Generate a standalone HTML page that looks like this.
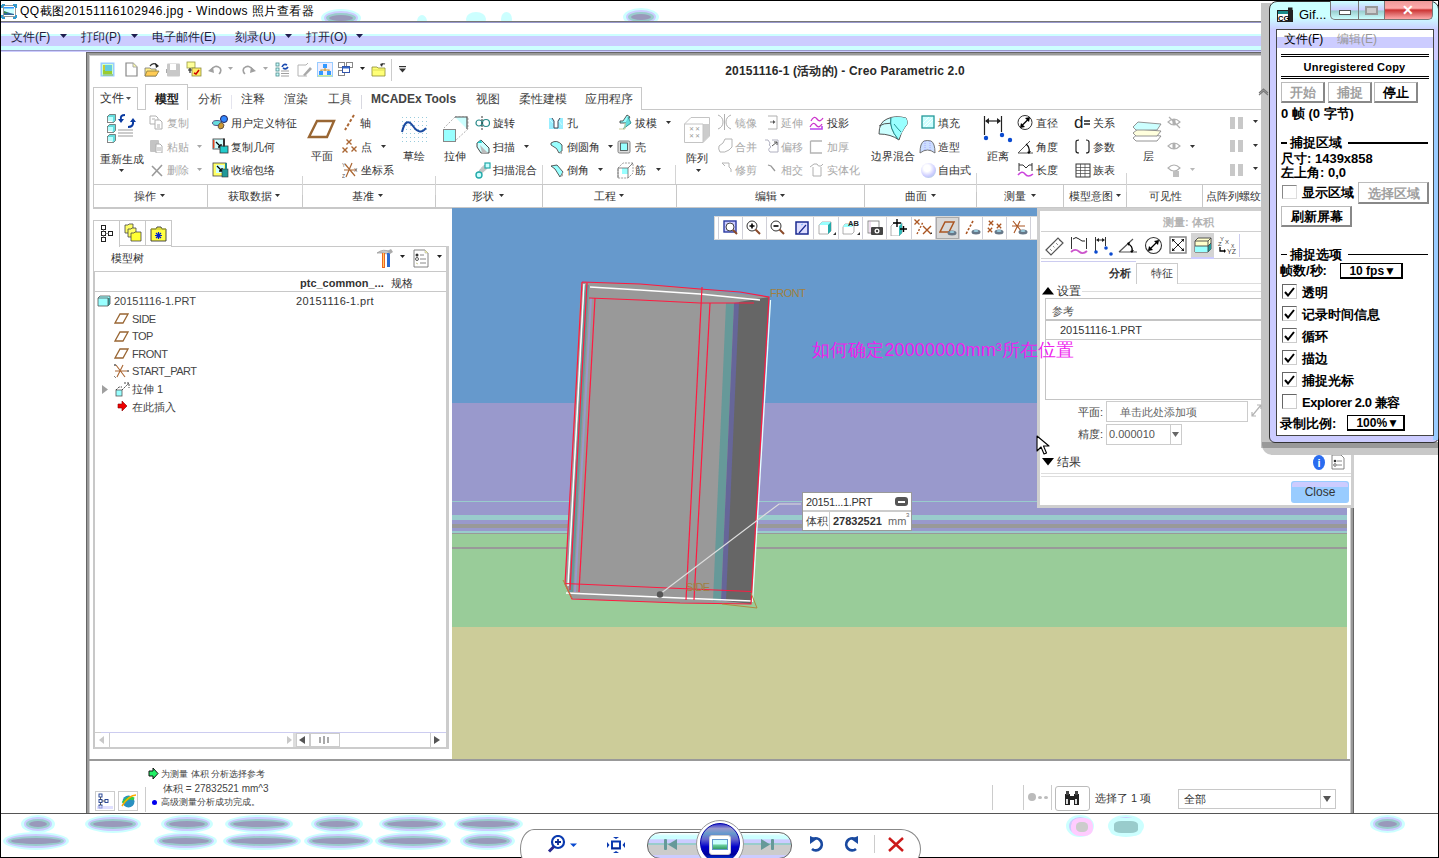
<!DOCTYPE html>
<html><head><meta charset="utf-8"><title>Creo</title>
<style>
html,body{margin:0;padding:0;}
body{width:1439px;height:858px;position:relative;overflow:hidden;background:#fff;font-family:"Liberation Sans",sans-serif;}
body div{position:absolute;box-sizing:border-box;}
.t{white-space:nowrap;}
</style></head><body>
<div style="left:0px;top:0px;width:1439px;height:1px;background:#000"></div><div style="left:0px;top:0px;width:1px;height:858px;background:#000"></div><div style="left:1438px;top:0px;width:1px;height:858px;background:#000"></div><div style="left:0px;top:857px;width:1439px;height:1px;background:#000"></div><svg style="position:absolute;left:1px;top:4px;" width="16" height="15" viewBox="0 0 16 15"><rect x="2.5" y="1.5" width="12" height="11" fill="#fff" stroke="#999" stroke-width="1"/><rect x="3" y="3" width="10" height="8" fill="#ccffff"/><rect x="3" y="3" width="10" height="1.5" fill="#3399ff"/><path d="M3 11V7L6 8L9 9L13 10V11Z" fill="#336699"/><path d="M3 8L6 9" stroke="#339933" stroke-width="1.2"/><path d="M1 1H4M1 1V4M12 1H15V4M1 14V11M1 14H4M15 14H12M15 14V11" stroke="#3399cc" stroke-width="2"/></svg><div class="t" style="left:20px;top:3.0px;font-size:12px;line-height:16px;color:#000;font-weight:400;letter-spacing:0.47px">QQ截图20151116102946.jpg - Windows 照片查看器</div><div style="left:1px;top:21px;width:1437px;height:1px;background:#777"></div><div style="left:1px;top:22px;width:1437px;height:1px;background:#9999cc"></div><div style="left:1px;top:34px;width:1437px;height:2px;background:#ccffff"></div><div style="left:1px;top:36px;width:1437px;height:10px;background:#ccccff"></div><div style="left:1px;top:46px;width:1437px;height:4px;background:#ccffff"></div><div style="left:1px;top:50px;width:1437px;height:1px;background:#9999cc"></div><div style="left:1px;top:51px;width:1437px;height:1px;background:#ccccff"></div><div class="t" style="left:11px;top:29.0px;font-size:12px;line-height:16px;color:#1e1e3c;font-weight:400;">文件(F)</div><div class="t" style="left:81px;top:29.0px;font-size:12px;line-height:16px;color:#1e1e3c;font-weight:400;">打印(P)</div><div class="t" style="left:152px;top:29.0px;font-size:12px;line-height:16px;color:#1e1e3c;font-weight:400;">电子邮件(E)</div><div class="t" style="left:235px;top:29.0px;font-size:12px;line-height:16px;color:#1e1e3c;font-weight:400;">刻录(U)</div><div class="t" style="left:306px;top:29.0px;font-size:12px;line-height:16px;color:#1e1e3c;font-weight:400;">打开(O)</div><svg style="position:absolute;left:60px;top:34px;" width="8" height="5" viewBox="0 0 8 5"><path d="M0 0H7L3.5 4Z" fill="#1e1e50"/></svg><svg style="position:absolute;left:131px;top:34px;" width="8" height="5" viewBox="0 0 8 5"><path d="M0 0H7L3.5 4Z" fill="#1e1e50"/></svg><svg style="position:absolute;left:285px;top:34px;" width="8" height="5" viewBox="0 0 8 5"><path d="M0 0H7L3.5 4Z" fill="#1e1e50"/></svg><svg style="position:absolute;left:356px;top:34px;" width="8" height="5" viewBox="0 0 8 5"><path d="M0 0H7L3.5 4Z" fill="#1e1e50"/></svg><div style="left:1px;top:813px;width:1437px;height:1px;background:#555"></div><div style="left:86px;top:52px;width:1268px;height:761px;background:#fff"></div><div style="left:86px;top:52px;width:4px;height:761px;background:linear-gradient(90deg,#666 0,#666 1px,#999 1px,#999 3px,#ccc 3px)"></div><div style="left:86px;top:52px;width:1268px;height:4px;background:linear-gradient(#666 0,#666 1px,#999 1px,#999 3px,#ccc 3px)"></div><div style="left:89px;top:55px;width:1262px;height:1px;background:#ccc"></div><div style="left:86px;top:52px;width:1px;height:761px;background:#666"></div><div style="left:87px;top:53px;width:2px;height:760px;background:#999"></div><div style="left:89px;top:55px;width:1px;height:758px;background:#ccc"></div><div style="left:1350px;top:52px;width:4px;height:761px;background:linear-gradient(90deg,#ccc 0,#ccc 1px,#999 1px,#999 3px,#666 3px)"></div><div class="t" style="left:645px;width:400px;text-align:center;top:63.0px;font-size:12px;line-height:16px;color:#2a2a2a;font-weight:700;letter-spacing:0.16px">20151116-1 (活动的) - Creo Parametric 2.0</div><div style="left:93px;top:109px;width:1170px;height:1px;background:#c8c8c8"></div><div style="left:93px;top:87px;width:45px;height:23px;border:1px solid #c8c8c8;border-bottom:none;background:#fff"></div><div style="left:188px;top:87px;width:454px;height:23px;border:1px solid #c8c8c8;border-bottom:none;border-left:none;background:#fff"></div><div style="left:145px;top:84px;width:43px;height:26px;border:1px solid #c8c8c8;border-bottom:none;background:#fff"></div><div class="t" style="left:100px;top:90.0px;font-size:12px;line-height:16px;color:#333;font-weight:400;">文件</div><svg style="position:absolute;left:126px;top:97px;" width="6" height="4" viewBox="0 0 6 4"><path d="M0 0H5L2.5 3Z" fill="#555"/></svg><div class="t" style="left:155px;top:90.5px;font-size:12px;line-height:16px;color:#222;font-weight:700;">模型</div><div class="t" style="left:198px;top:90.5px;font-size:12px;line-height:16px;color:#444;font-weight:400;">分析</div><div class="t" style="left:241px;top:90.5px;font-size:12px;line-height:16px;color:#444;font-weight:400;">注释</div><div class="t" style="left:284px;top:90.5px;font-size:12px;line-height:16px;color:#444;font-weight:400;">渲染</div><div class="t" style="left:328px;top:90.5px;font-size:12px;line-height:16px;color:#444;font-weight:400;">工具</div><div class="t" style="left:476px;top:90.5px;font-size:12px;line-height:16px;color:#444;font-weight:400;">视图</div><div class="t" style="left:519px;top:90.5px;font-size:12px;line-height:16px;color:#444;font-weight:400;">柔性建模</div><div class="t" style="left:585px;top:90.5px;font-size:12px;line-height:16px;color:#444;font-weight:400;">应用程序</div><div class="t" style="left:371px;top:90.5px;font-size:12px;line-height:16px;color:#444;font-weight:700;">MCADEx Tools</div><div style="left:231px;top:95px;width:1px;height:14px;background:#e4e4ee"></div><div style="left:361px;top:95px;width:1px;height:14px;background:#d8d8e0"></div><div style="left:93px;top:110px;width:1px;height:98px;background:#c8c8c8"></div><div style="left:93px;top:184px;width:1170px;height:1px;background:#c8c8c8"></div><div style="left:93px;top:207px;width:1170px;height:2px;background:#c8c8c8"></div><div style="left:207px;top:185px;width:1px;height:22px;background:#c8c8c8"></div><div style="left:302px;top:185px;width:1px;height:22px;background:#c8c8c8"></div><div style="left:435px;top:185px;width:1px;height:22px;background:#c8c8c8"></div><div style="left:542px;top:185px;width:1px;height:22px;background:#c8c8c8"></div><div style="left:676px;top:185px;width:1px;height:22px;background:#c8c8c8"></div><div style="left:864px;top:185px;width:1px;height:22px;background:#c8c8c8"></div><div style="left:976px;top:185px;width:1px;height:22px;background:#c8c8c8"></div><div style="left:1126px;top:185px;width:1px;height:22px;background:#c8c8c8"></div><div style="left:1202px;top:185px;width:1px;height:22px;background:#c8c8c8"></div><div style="left:302px;top:176px;width:1px;height:19px;background:#d4d4d4"></div><div style="left:435px;top:176px;width:1px;height:19px;background:#d4d4d4"></div><div style="left:542px;top:165px;width:1px;height:19px;background:#d4d4d4"></div><div style="left:675px;top:165px;width:1px;height:19px;background:#d4d4d4"></div><div style="left:976px;top:173px;width:1px;height:19px;background:#d4d4d4"></div><div style="left:1126px;top:173px;width:1px;height:19px;background:#d4d4d4"></div><div style="left:1063px;top:185px;width:1px;height:22px;background:#c8c8c8"></div><div class="t" style="left:134px;top:189.0px;font-size:11px;line-height:14px;color:#333;font-weight:400;">操作</div><div class="t" style="left:228px;top:189.0px;font-size:11px;line-height:14px;color:#333;font-weight:400;">获取数据</div><div class="t" style="left:352px;top:189.0px;font-size:11px;line-height:14px;color:#333;font-weight:400;">基准</div><div class="t" style="left:472px;top:189.0px;font-size:11px;line-height:14px;color:#333;font-weight:400;">形状</div><div class="t" style="left:594px;top:189.0px;font-size:11px;line-height:14px;color:#333;font-weight:400;">工程</div><div class="t" style="left:755px;top:189.0px;font-size:11px;line-height:14px;color:#333;font-weight:400;">编辑</div><div class="t" style="left:905px;top:189.0px;font-size:11px;line-height:14px;color:#333;font-weight:400;">曲面</div><div class="t" style="left:1004px;top:189.0px;font-size:11px;line-height:14px;color:#333;font-weight:400;">测量</div><div class="t" style="left:1069px;top:189.0px;font-size:11px;line-height:14px;color:#333;font-weight:400;">模型意图</div><svg style="position:absolute;left:160px;top:194px;" width="6" height="4" viewBox="0 0 6 4"><path d="M0 0H5L2.5 3Z" fill="#333"/></svg><svg style="position:absolute;left:275px;top:194px;" width="6" height="4" viewBox="0 0 6 4"><path d="M0 0H5L2.5 3Z" fill="#333"/></svg><svg style="position:absolute;left:378px;top:194px;" width="6" height="4" viewBox="0 0 6 4"><path d="M0 0H5L2.5 3Z" fill="#333"/></svg><svg style="position:absolute;left:499px;top:194px;" width="6" height="4" viewBox="0 0 6 4"><path d="M0 0H5L2.5 3Z" fill="#333"/></svg><svg style="position:absolute;left:619px;top:194px;" width="6" height="4" viewBox="0 0 6 4"><path d="M0 0H5L2.5 3Z" fill="#333"/></svg><svg style="position:absolute;left:780px;top:194px;" width="6" height="4" viewBox="0 0 6 4"><path d="M0 0H5L2.5 3Z" fill="#333"/></svg><svg style="position:absolute;left:931px;top:194px;" width="6" height="4" viewBox="0 0 6 4"><path d="M0 0H5L2.5 3Z" fill="#333"/></svg><svg style="position:absolute;left:1031px;top:194px;" width="6" height="4" viewBox="0 0 6 4"><path d="M0 0H5L2.5 3Z" fill="#333"/></svg><svg style="position:absolute;left:1116px;top:194px;" width="6" height="4" viewBox="0 0 6 4"><path d="M0 0H5L2.5 3Z" fill="#333"/></svg><div class="t" style="left:1149px;top:189.0px;font-size:11px;line-height:14px;color:#333;font-weight:400;">可见性</div><div class="t" style="left:1206px;top:189.0px;font-size:11px;line-height:14px;color:#333;font-weight:400;">点阵列螺纹孔</div><div class="t" style="left:100px;top:151.5px;font-size:11px;line-height:14px;color:#333;font-weight:400;">重新生成</div><svg style="position:absolute;left:119px;top:169px;" width="6" height="4" viewBox="0 0 6 4"><path d="M0 0H5L2.5 3Z" fill="#333"/></svg><div class="t" style="left:167px;top:116.0px;font-size:11px;line-height:14px;color:#a8a8a8;font-weight:400;">复制</div><div class="t" style="left:167px;top:139.5px;font-size:11px;line-height:14px;color:#a8a8a8;font-weight:400;">粘贴</div><svg style="position:absolute;left:197px;top:144.5px;" width="6" height="4" viewBox="0 0 6 4"><path d="M0 0H5L2.5 3Z" fill="#a8a8a8"/></svg><div class="t" style="left:167px;top:163.0px;font-size:11px;line-height:14px;color:#a8a8a8;font-weight:400;">删除</div><svg style="position:absolute;left:197px;top:168px;" width="6" height="4" viewBox="0 0 6 4"><path d="M0 0H5L2.5 3Z" fill="#a8a8a8"/></svg><div class="t" style="left:231px;top:116.0px;font-size:11px;line-height:14px;color:#333;font-weight:400;">用户定义特征</div><div class="t" style="left:231px;top:139.5px;font-size:11px;line-height:14px;color:#333;font-weight:400;">复制几何</div><div class="t" style="left:231px;top:163.0px;font-size:11px;line-height:14px;color:#333;font-weight:400;">收缩包络</div><div class="t" style="left:311px;top:149.0px;font-size:11px;line-height:14px;color:#333;font-weight:400;">平面</div><div class="t" style="left:360px;top:116.0px;font-size:11px;line-height:14px;color:#333;font-weight:400;">轴</div><div class="t" style="left:361px;top:139.5px;font-size:11px;line-height:14px;color:#333;font-weight:400;">点</div><svg style="position:absolute;left:381px;top:144.5px;" width="6" height="4" viewBox="0 0 6 4"><path d="M0 0H5L2.5 3Z" fill="#333"/></svg><div class="t" style="left:361px;top:163.0px;font-size:11px;line-height:14px;color:#333;font-weight:400;">坐标系</div><div class="t" style="left:403px;top:149.0px;font-size:11px;line-height:14px;color:#333;font-weight:400;">草绘</div><div class="t" style="left:444px;top:149.0px;font-size:11px;line-height:14px;color:#333;font-weight:400;">拉伸</div><div class="t" style="left:493px;top:116.0px;font-size:11px;line-height:14px;color:#333;font-weight:400;">旋转</div><div class="t" style="left:493px;top:139.5px;font-size:11px;line-height:14px;color:#333;font-weight:400;">扫描</div><svg style="position:absolute;left:524px;top:144.5px;" width="6" height="4" viewBox="0 0 6 4"><path d="M0 0H5L2.5 3Z" fill="#333"/></svg><div class="t" style="left:493px;top:163.0px;font-size:11px;line-height:14px;color:#333;font-weight:400;">扫描混合</div><div class="t" style="left:567px;top:116.0px;font-size:11px;line-height:14px;color:#333;font-weight:400;">孔</div><div class="t" style="left:567px;top:139.5px;font-size:11px;line-height:14px;color:#333;font-weight:400;">倒圆角</div><svg style="position:absolute;left:608px;top:144.5px;" width="6" height="4" viewBox="0 0 6 4"><path d="M0 0H5L2.5 3Z" fill="#333"/></svg><div class="t" style="left:567px;top:163.0px;font-size:11px;line-height:14px;color:#333;font-weight:400;">倒角</div><svg style="position:absolute;left:598px;top:168px;" width="6" height="4" viewBox="0 0 6 4"><path d="M0 0H5L2.5 3Z" fill="#333"/></svg><div class="t" style="left:635px;top:116.0px;font-size:11px;line-height:14px;color:#333;font-weight:400;">拔模</div><svg style="position:absolute;left:666px;top:121px;" width="6" height="4" viewBox="0 0 6 4"><path d="M0 0H5L2.5 3Z" fill="#333"/></svg><div class="t" style="left:635px;top:139.5px;font-size:11px;line-height:14px;color:#333;font-weight:400;">壳</div><div class="t" style="left:635px;top:163.0px;font-size:11px;line-height:14px;color:#333;font-weight:400;">筋</div><svg style="position:absolute;left:656px;top:168px;" width="6" height="4" viewBox="0 0 6 4"><path d="M0 0H5L2.5 3Z" fill="#333"/></svg><div class="t" style="left:686px;top:151.0px;font-size:11px;line-height:14px;color:#333;font-weight:400;">阵列</div><svg style="position:absolute;left:696px;top:169px;" width="6" height="4" viewBox="0 0 6 4"><path d="M0 0H5L2.5 3Z" fill="#333"/></svg><div class="t" style="left:735px;top:116.0px;font-size:11px;line-height:14px;color:#a8a8a8;font-weight:400;">镜像</div><div class="t" style="left:735px;top:139.5px;font-size:11px;line-height:14px;color:#a8a8a8;font-weight:400;">合并</div><div class="t" style="left:735px;top:163.0px;font-size:11px;line-height:14px;color:#a8a8a8;font-weight:400;">修剪</div><div class="t" style="left:781px;top:116.0px;font-size:11px;line-height:14px;color:#a8a8a8;font-weight:400;">延伸</div><div class="t" style="left:781px;top:139.5px;font-size:11px;line-height:14px;color:#a8a8a8;font-weight:400;">偏移</div><div class="t" style="left:781px;top:163.0px;font-size:11px;line-height:14px;color:#a8a8a8;font-weight:400;">相交</div><div class="t" style="left:827px;top:116.0px;font-size:11px;line-height:14px;color:#333;font-weight:400;">投影</div><div class="t" style="left:827px;top:139.5px;font-size:11px;line-height:14px;color:#a8a8a8;font-weight:400;">加厚</div><div class="t" style="left:827px;top:163.0px;font-size:11px;line-height:14px;color:#a8a8a8;font-weight:400;">实体化</div><div class="t" style="left:871px;top:149.0px;font-size:11px;line-height:14px;color:#333;font-weight:400;">边界混合</div><div class="t" style="left:938px;top:116.0px;font-size:11px;line-height:14px;color:#333;font-weight:400;">填充</div><div class="t" style="left:938px;top:139.5px;font-size:11px;line-height:14px;color:#333;font-weight:400;">造型</div><div class="t" style="left:938px;top:163.0px;font-size:11px;line-height:14px;color:#333;font-weight:400;">自由式</div><div class="t" style="left:987px;top:149.0px;font-size:11px;line-height:14px;color:#333;font-weight:400;">距离</div><div class="t" style="left:1036px;top:116.0px;font-size:11px;line-height:14px;color:#333;font-weight:400;">直径</div><div class="t" style="left:1036px;top:139.5px;font-size:11px;line-height:14px;color:#333;font-weight:400;">角度</div><div class="t" style="left:1036px;top:163.0px;font-size:11px;line-height:14px;color:#333;font-weight:400;">长度</div><div class="t" style="left:1093px;top:116.0px;font-size:11px;line-height:14px;color:#333;font-weight:400;">关系</div><div class="t" style="left:1093px;top:139.5px;font-size:11px;line-height:14px;color:#333;font-weight:400;">参数</div><div class="t" style="left:1093px;top:163.0px;font-size:11px;line-height:14px;color:#333;font-weight:400;">族表</div><div class="t" style="left:1143px;top:149.0px;font-size:11px;line-height:14px;color:#333;font-weight:400;">层</div><div style="left:93px;top:220px;width:27px;height:27px;border:1px solid #c8c8c8;border-bottom:none;background:#fff"></div><div style="left:119px;top:220px;width:27px;height:26px;border:1px solid #c8c8c8;background:#fff"></div><div style="left:145px;top:220px;width:27px;height:26px;border:1px solid #c8c8c8;background:#fff"></div><div style="left:171px;top:246px;width:275px;height:1px;background:#c8c8c8"></div><div style="left:93px;top:246px;width:1px;height:503px;background:#c8c8c8"></div><div class="t" style="left:111px;top:251.0px;font-size:11px;line-height:14px;color:#333;font-weight:400;">模型树</div><div style="left:94px;top:271px;width:352px;height:1px;background:#c8c8c8"></div><div style="left:94px;top:291px;width:352px;height:1px;background:#c8c8c8"></div><div style="left:94px;top:271px;width:1px;height:478px;background:#c8c8c8"></div><div style="left:446px;top:246px;width:3px;height:503px;background:#cccccc"></div><div class="t" style="left:300px;top:276.0px;font-size:11px;line-height:14px;color:#333;font-weight:700;">ptc_common_...</div><div class="t" style="left:391px;top:276.0px;font-size:11px;line-height:14px;color:#333;font-weight:400;">规格</div><div class="t" style="left:114px;top:294.3px;font-size:11px;line-height:14px;color:#444;font-weight:400;">20151116-1.PRT</div><div class="t" style="left:132px;top:311.6px;font-size:11px;line-height:14px;color:#444;font-weight:400;letter-spacing:-0.5px">SIDE</div><div class="t" style="left:132px;top:329.0px;font-size:11px;line-height:14px;color:#444;font-weight:400;letter-spacing:-0.5px">TOP</div><div class="t" style="left:132px;top:346.5px;font-size:11px;line-height:14px;color:#444;font-weight:400;letter-spacing:-0.5px">FRONT</div><div class="t" style="left:132px;top:364.0px;font-size:11px;line-height:14px;color:#444;font-weight:400;letter-spacing:-0.5px">START_PART</div><div class="t" style="left:132px;top:382.0px;font-size:11px;line-height:14px;color:#444;font-weight:400;">拉伸 1</div><div class="t" style="left:132px;top:399.6px;font-size:11px;line-height:14px;color:#444;font-weight:400;">在此插入</div><div class="t" style="left:296px;top:294.3px;font-size:11px;line-height:14px;color:#333;font-weight:400;letter-spacing:0.35px">20151116-1.prt</div><div style="left:95px;top:732px;width:6px;height:1px;background:#ccc"></div><div style="left:101px;top:732px;width:345px;height:1px;background:#ccccf0"></div><div style="left:94px;top:747px;width:355px;height:2px;background:#cccccc"></div><div style="left:109px;top:733px;width:1px;height:14px;background:#ccc"></div><div style="left:293px;top:733px;width:3px;height:14px;background:#ddd"></div><div style="left:296px;top:733px;width:14px;height:14px;border:1px solid #ccc"></div><div style="left:310px;top:733px;width:30px;height:14px;border:1px solid #ccc"></div><div style="left:430px;top:733px;width:15px;height:14px;border-left:1px solid #ccc"></div><div style="left:89px;top:759px;width:1261px;height:2px;background:#999"></div><div class="t" style="left:161px;top:768.0px;font-size:9.1px;line-height:12px;color:#444;font-weight:400;">为测量 体积 分析选择参考</div><div class="t" style="left:163px;top:781.5px;font-size:10px;line-height:13px;color:#444;font-weight:400;">体积 = 27832521 mm^3</div><div class="t" style="left:161px;top:796.0px;font-size:9.1px;line-height:12px;color:#444;font-weight:400;">高级测量分析成功完成。</div><div style="left:152px;top:800px;width:5px;height:5px;background:#0000ee;border-radius:50%"></div><div style="left:145px;top:787px;width:1px;height:25px;background:#ccc"></div><div style="left:95px;top:791px;width:20px;height:20px;border:1px solid #ccc;background:#fff"></div><div style="left:118px;top:791px;width:20px;height:20px;border:1px solid #ccc;background:#fff"></div><div style="left:452px;top:208px;width:895px;height:195px;background:#6699cc"></div><div style="left:452px;top:403px;width:895px;height:98px;background:#9999cc"></div><div style="left:452px;top:501px;width:895px;height:1px;background:#99cccc"></div><div style="left:452px;top:502px;width:895px;height:13px;background:#9999cc"></div><div style="left:452px;top:515px;width:895px;height:5px;background:#99cccc"></div><div style="left:452px;top:520px;width:895px;height:4px;background:#9999cc"></div><div style="left:452px;top:524px;width:895px;height:4px;background:#999999"></div><div style="left:452px;top:528px;width:895px;height:3px;background:#9999cc"></div><div style="left:452px;top:531px;width:895px;height:2px;background:#99cccc"></div><div style="left:452px;top:533px;width:895px;height:1px;background:#999999"></div><div style="left:452px;top:534px;width:895px;height:13px;background:#99cc99"></div><div style="left:452px;top:547px;width:895px;height:2px;background:#999999"></div><div style="left:452px;top:549px;width:895px;height:78px;background:#99cc99"></div><div style="left:452px;top:627px;width:895px;height:132px;background:#cccc99"></div><svg style="position:absolute;left:0;top:0" width="1439" height="858" viewBox="0 0 1439 858">
<polygon points="582,282 640,284 700,289 769,297 751,604 680,603 572,599 565,584" fill="#999999"/>
<polygon points="726,303 734,303 721,601 713,601" fill="#669999"/>
<polygon points="734,303 740,302 727,601 721,601" fill="#666699"/>
<polygon points="739,302 769,297 751,604 726,601" fill="#666666"/>
<polygon points="581,282 595,298 579,592 565,584" fill="#999999"/>
<polyline points="584,284 568,586" stroke="#ffffff" stroke-width="1.5" fill="none"/>
<polygon points="585,285 589,285 573,592 569,592" fill="#669999"/>
<polyline points="591,298 575,592" stroke="#9999cc" stroke-width="2" fill="none"/>
<polyline points="590,287 640,290 700,294 760,300" stroke="#ffffff" stroke-width="1.5" fill="none"/>
<polyline points="566,593 680,598 751,601" stroke="#ffffff" stroke-width="1.5" fill="none"/>
<polyline points="770.5,300 752.5,602" stroke="#e8ffff" stroke-width="1.3" fill="none"/>
<g stroke="#ff1a40" stroke-width="1.2" fill="none">
<polyline points="582,282 640,284 700,289 740,292 769,297 751,604 680,603 572,599 565,584 582,282"/>
<polyline points="589,298 640,300 700,303 754,303"/>
<polyline points="587,283 570,590"/>
<polyline points="595,298 579,592"/>
<polyline points="565,583.5 680,588.5 751,591.5"/>
<polyline points="702,287 686,600"/>
<polyline points="710,303 694,600"/>
</g>
<polyline points="660,594 779,504 801,504" stroke="#dddddd" stroke-width="1.2" fill="none"/>
<circle cx="660" cy="594.5" r="3.2" fill="#555"/>
<g stroke="#b08a40" stroke-width="1" fill="none">
<polyline points="722,604 757,608 751,593"/>
<polyline points="563,580 572,598"/>
</g>
</svg><div class="t" style="left:770px;top:285.5px;font-size:11px;line-height:14px;color:#a08040;font-weight:400;letter-spacing:-0.5px">FRONT</div><div class="t" style="left:686px;top:580.0px;font-size:11px;line-height:14px;color:#a08040;font-weight:400;letter-spacing:-0.5px">SIDE</div><div style="left:802px;top:492px;width:110px;height:39px;background:#fff;border:1px solid #999"></div><div style="left:803px;top:510px;width:108px;height:2px;background:#cccccc"></div><div style="left:829px;top:512px;width:1px;height:18px;background:#ccc"></div><div class="t" style="left:806px;top:495.0px;font-size:11px;line-height:14px;color:#333;font-weight:400;letter-spacing:-0.35px">20151...1.PRT</div><div style="left:895px;top:497px;width:13px;height:9px;background:#555;border-radius:3px"></div><div style="left:898px;top:501px;width:7px;height:1.5px;background:#fff"></div><div class="t" style="left:806px;top:514.0px;font-size:11px;line-height:14px;color:#444;font-weight:400;">体积</div><div class="t" style="left:833px;top:514.0px;font-size:11px;line-height:14px;color:#333;font-weight:700;">27832521</div><div class="t" style="left:888px;top:514.0px;font-size:11px;line-height:14px;color:#666;font-weight:400;">mm</div><div class="t" style="left:906px;top:511.0px;font-size:6px;line-height:8px;color:#666;font-weight:400;">3</div><div style="left:714px;top:216px;width:324px;height:24px;background:#fff;border:1px solid #d8d8d8"></div><div style="left:718px;top:217px;width:1px;height:22px;background:#d0d0d8"></div><div style="left:742px;top:217px;width:1px;height:22px;background:#d0d0d8"></div><div style="left:766px;top:217px;width:1px;height:22px;background:#d0d0d8"></div><div style="left:813px;top:217px;width:1px;height:22px;background:#d0d0d8"></div><div style="left:838px;top:217px;width:1px;height:22px;background:#d0d0d8"></div><div style="left:862px;top:217px;width:1px;height:22px;background:#d0d0d8"></div><div style="left:886px;top:217px;width:1px;height:22px;background:#d0d0d8"></div><div style="left:911px;top:217px;width:1px;height:22px;background:#d0d0d8"></div><div style="left:935px;top:217px;width:1px;height:22px;background:#d0d0d8"></div><div style="left:959px;top:217px;width:1px;height:22px;background:#d0d0d8"></div><div style="left:982px;top:217px;width:1px;height:22px;background:#d0d0d8"></div><div style="left:1006px;top:217px;width:1px;height:22px;background:#d0d0d8"></div><div style="left:1030px;top:217px;width:1px;height:22px;background:#d0d0d8"></div><div style="left:936px;top:217px;width:23px;height:22px;background:#d8d8d8;border:1px solid #aaa"></div><div style="left:1037px;top:208px;width:317px;height:300px;background:#fff;border:3px solid #cfcfcf"></div><div class="t" style="left:1163px;top:215.0px;font-size:11px;line-height:14px;color:#b4b4b4;font-weight:700;">测量: 体积</div><div style="left:1041px;top:231px;width:310px;height:1px;background:#d0d0d0"></div><div style="left:1041px;top:258px;width:310px;height:1px;background:#d0d0d0"></div><div style="left:1191px;top:233px;width:23px;height:25px;background:#d4d4d4"></div><div style="left:1041px;top:261px;width:95px;height:1px;background:#ccccf0"></div><div style="left:1136px;top:263px;width:42px;height:21px;border:1px solid #ccc;border-bottom:none"></div><div style="left:1178px;top:283px;width:172px;height:1px;background:#ddd"></div><div class="t" style="left:1109px;top:266.0px;font-size:11px;line-height:14px;color:#333;font-weight:700;">分析</div><div class="t" style="left:1151px;top:266.0px;font-size:11px;line-height:14px;color:#444;font-weight:400;">特征</div><svg style="position:absolute;left:1042px;top:287px;" width="13" height="8" viewBox="0 0 13 8"><path d="M0 7.5H12L6 0Z" fill="#000"/></svg><div class="t" style="left:1057px;top:283.0px;font-size:12px;line-height:16px;color:#333;font-weight:400;">设置</div><div style="left:1082px;top:291px;width:268px;height:1px;background:#ddd"></div><div style="left:1045px;top:298px;width:305px;height:102px;border:1px solid #c4c4c4;background:#fff"></div><div class="t" style="left:1052px;top:304.0px;font-size:11px;line-height:14px;color:#555;font-weight:400;">参考</div><div style="left:1046px;top:319px;width:304px;height:2px;background:#c4c4c4"></div><div class="t" style="left:1060px;top:323.0px;font-size:11px;line-height:14px;color:#333;font-weight:400;">20151116-1.PRT</div><div style="left:1046px;top:339px;width:304px;height:1px;background:#c8c8c8"></div><div class="t" style="left:1078px;top:405.0px;font-size:11px;line-height:14px;color:#444;font-weight:400;">平面:</div><div style="left:1106px;top:401px;width:142px;height:21px;border:1px solid #ccc"></div><div class="t" style="left:1120px;top:405.0px;font-size:11px;line-height:14px;color:#666;font-weight:400;">单击此处添加项</div><div class="t" style="left:1078px;top:427.0px;font-size:11px;line-height:14px;color:#444;font-weight:400;">精度:</div><div style="left:1106px;top:424px;width:65px;height:21px;border:1px solid #ccc"></div><div style="left:1170px;top:424px;width:12px;height:21px;border:1px solid #ccc;border-left:none"></div><div class="t" style="left:1109px;top:427.0px;font-size:11px;line-height:14px;color:#555;font-weight:400;">0.000010</div><svg style="position:absolute;left:1172px;top:432px;" width="8" height="5" viewBox="0 0 8 5"><path d="M0 0H7L3.5 5Z" fill="#666"/></svg><svg style="position:absolute;left:1042px;top:458px;" width="13" height="8" viewBox="0 0 13 8"><path d="M0 0H12L6 7.5Z" fill="#000"/></svg><div class="t" style="left:1057px;top:454.0px;font-size:12px;line-height:16px;color:#333;font-weight:400;">结果</div><div style="left:1041px;top:473px;width:310px;height:1px;background:#ddd"></div><div style="left:1041px;top:476px;width:310px;height:1px;background:#ddd"></div><div style="left:1291px;top:481px;width:58px;height:22px;background:#99ccff;border-radius:3px"></div><div style="left:1292px;top:482px;width:56px;height:5px;background:#ccccff;border-radius:3px 3px 0 0"></div><div class="t" style="left:1120px;width:400px;text-align:center;top:483.5px;font-size:12px;line-height:16px;color:#333;font-weight:400;">Close</div><div style="left:1313px;top:455px;width:12px;height:15px;background:#2a6cf0;border-radius:50%"></div><div class="t" style="left:1119px;width:400px;text-align:center;top:455.5px;font-size:11px;line-height:14px;color:#fff;font-weight:700;">i</div><svg style="position:absolute;left:1331px;top:454px;" width="14" height="16" viewBox="0 0 14 16"><path d="M1 1H10L13 4V15H1Z" fill="#fff" stroke="#777" stroke-width="0.9"/><circle cx="4" cy="7" r="1.3" fill="#333"/><circle cx="4" cy="11" r="1.3" fill="none" stroke="#333" stroke-width="0.7"/><path d="M6 7H11M6 11H11" stroke="#888"/></svg><div class="t" style="left:812px;top:338.5px;font-size:18px;line-height:23px;color:#ee22ee;font-weight:400;letter-spacing:0.12px">如何确定20000000mm³所在位置</div><div style="left:1261px;top:3px;width:10px;height:445px;background:#c4c4c4"></div><div style="left:1262px;top:442px;width:176px;height:13px;background:linear-gradient(#999 0,#999 6px,#c8c8c8 6px);border-radius:0 0 0 10px"></div><div style="left:1269px;top:1px;width:170px;height:442px;background:linear-gradient(#ccffff 0,#ccffff 15px,#ccccff 28px,#ccccff 100%);border:1px solid #333;border-radius:8px 8px 6px 6px"></div><div style="left:1433px;top:60px;width:5px;height:380px;background:#99ccff"></div><div style="left:1276px;top:29px;width:158px;height:407px;background:#fff;border:1px solid #444"></div><div style="left:1277px;top:37px;width:156px;height:11px;background:#ccccff"></div><div class="t" style="left:1284px;top:31.0px;font-size:12px;line-height:16px;color:#000;font-weight:400;">文件(F)</div><div class="t" style="left:1337px;top:31.0px;font-size:12px;line-height:16px;color:#999;font-weight:400;">编辑(E)</div><svg style="position:absolute;left:1277px;top:7px;" width="16" height="15" viewBox="0 0 16 15"><rect x="0.5" y="3.5" width="15" height="11" fill="#fff" stroke="#222"/><rect x="1" y="4" width="10" height="3" fill="#1a8a8a"/><rect x="11" y="0.5" width="4.5" height="14" fill="#222"/><text x="1" y="13.5" font-size="7.5" font-weight="700" fill="#000" font-family="Liberation Sans">CG</text></svg><div class="t" style="left:1299px;top:5.5px;font-size:13px;line-height:17px;color:#000;font-weight:400;">Gif...</div><div style="left:1330px;top:1px;width:29px;height:19px;background:linear-gradient(#ccffff,#ccccff 50%,#99cccc 55%,#ccffff);border:1px solid #777;border-top:none;border-radius:0 0 0 5px"></div><div style="left:1358px;top:1px;width:27px;height:19px;background:linear-gradient(#ccffff,#ccccff 50%,#99cccc 55%,#ccffff);border:1px solid #777;border-top:none"></div><div style="left:1384px;top:1px;width:49px;height:19px;background:linear-gradient(#ee9999,#ffaaaa 40%,#cc3333 50%,#dd6666 70%,#ffaaaa);border:1px solid #777;border-top:none;border-radius:0 0 5px 0"></div><div style="left:1339px;top:10px;width:12px;height:5px;background:#fff;border:1px solid #555"></div><div style="left:1365px;top:6px;width:13px;height:9px;border:2px solid #999;background:#ccc"></div><div class="t" style="left:1208px;width:400px;text-align:center;top:0.5px;font-size:14px;line-height:18px;color:#fff;font-weight:700;">✕</div><div style="left:1281px;top:54px;width:148px;height:1px;background:#000"></div><div style="left:1281px;top:56px;width:148px;height:1px;background:#000"></div><div style="left:1281px;top:76px;width:148px;height:1px;background:#000"></div><div style="left:1281px;top:78px;width:148px;height:1px;background:#000"></div><div class="t" style="left:1154.5px;width:400px;text-align:center;top:60.0px;font-size:11px;line-height:14px;color:#000;font-weight:700;letter-spacing:0.2px">Unregistered Copy</div><div style="left:1281px;top:82px;width:44px;height:21px;background:#fff;border:1px solid #bbb;border-right:2px solid #888;border-bottom:2px solid #888"></div><div class="t" style="left:1103.0px;width:400px;text-align:center;top:84.0px;font-size:13px;line-height:17px;color:#a0a0a0;font-weight:700;">开始</div><div style="left:1328px;top:82px;width:44px;height:21px;background:#fff;border:1px solid #bbb;border-right:2px solid #888;border-bottom:2px solid #888"></div><div class="t" style="left:1150.0px;width:400px;text-align:center;top:84.0px;font-size:13px;line-height:17px;color:#a0a0a0;font-weight:700;">捕捉</div><div style="left:1374px;top:82px;width:44px;height:21px;background:#fff;border:1px solid #bbb;border-right:2px solid #888;border-bottom:2px solid #888"></div><div class="t" style="left:1196.0px;width:400px;text-align:center;top:84.0px;font-size:13px;line-height:17px;color:#000;font-weight:700;">停止</div><div class="t" style="left:1281px;top:104.5px;font-size:13px;line-height:17px;color:#000;font-weight:700;">0 帧 (0 字节)</div><div style="left:1281px;top:142px;width:6px;height:1.5px;background:#000"></div><div class="t" style="left:1290px;top:134.0px;font-size:13px;line-height:17px;color:#000;font-weight:700;">捕捉区域</div><div style="left:1348px;top:142px;width:80px;height:1.5px;background:#000"></div><div class="t" style="left:1281px;top:149.5px;font-size:13px;line-height:17px;color:#000;font-weight:700;">尺寸: 1439x858</div><div class="t" style="left:1281px;top:163.5px;font-size:13px;line-height:17px;color:#000;font-weight:700;">左上角: 0,0</div><div style="left:1282px;top:185px;width:15px;height:14px;border:1px solid #888;border-right-color:#ddd;border-bottom-color:#ddd;background:#fff"></div><div class="t" style="left:1302px;top:183.5px;font-size:13px;line-height:17px;color:#000;font-weight:700;">显示区域</div><div style="left:1358px;top:182px;width:71px;height:22px;background:#fff;border:1px solid #bbb;border-right:2px solid #888;border-bottom:2px solid #888"></div><div class="t" style="left:1193.5px;width:400px;text-align:center;top:184.5px;font-size:13px;line-height:17px;color:#a0a0a0;font-weight:700;">选择区域</div><div style="left:1281px;top:206px;width:71px;height:21px;background:#fff;border:1px solid #bbb;border-right:2px solid #888;border-bottom:2px solid #888"></div><div class="t" style="left:1116.5px;width:400px;text-align:center;top:208.0px;font-size:13px;line-height:17px;color:#000;font-weight:700;">刷新屏幕</div><div style="left:1281px;top:253.5px;width:6px;height:1.5px;background:#000"></div><div class="t" style="left:1290px;top:245.5px;font-size:13px;line-height:17px;color:#000;font-weight:700;">捕捉选项</div><div style="left:1348px;top:253.5px;width:80px;height:1.5px;background:#000"></div><div class="t" style="left:1280px;top:262.0px;font-size:13px;line-height:17px;color:#000;font-weight:700;">帧数/秒:</div><div style="left:1340px;top:263px;width:63px;height:16px;border:1px solid #000;border-right-width:2px;border-bottom-width:2px;background:#fff"></div><div class="t" style="left:996px;width:400px;text-align:right;top:263.0px;font-size:12px;line-height:16px;color:#000;font-weight:700;">10 fps▼</div><div style="left:1282px;top:284px;width:15px;height:15px;border:1px solid #666;border-right-color:#ccc;border-bottom-color:#ccc;background:#fff"></div><svg style="position:absolute;left:1284px;top:287px;" width="11" height="10" viewBox="0 0 11 10"><path d="M1 5 L4 8.5 L10 1" stroke="#000" stroke-width="2" fill="none"/></svg><div class="t" style="left:1302px;top:283.5px;font-size:13px;line-height:17px;color:#000;font-weight:700;">透明</div><div style="left:1282px;top:306px;width:15px;height:15px;border:1px solid #666;border-right-color:#ccc;border-bottom-color:#ccc;background:#fff"></div><svg style="position:absolute;left:1284px;top:309px;" width="11" height="10" viewBox="0 0 11 10"><path d="M1 5 L4 8.5 L10 1" stroke="#000" stroke-width="2" fill="none"/></svg><div class="t" style="left:1302px;top:305.5px;font-size:13px;line-height:17px;color:#000;font-weight:700;">记录时间信息</div><div style="left:1282px;top:328px;width:15px;height:15px;border:1px solid #666;border-right-color:#ccc;border-bottom-color:#ccc;background:#fff"></div><svg style="position:absolute;left:1284px;top:331px;" width="11" height="10" viewBox="0 0 11 10"><path d="M1 5 L4 8.5 L10 1" stroke="#000" stroke-width="2" fill="none"/></svg><div class="t" style="left:1302px;top:327.5px;font-size:13px;line-height:17px;color:#000;font-weight:700;">循环</div><div style="left:1282px;top:350px;width:15px;height:15px;border:1px solid #666;border-right-color:#ccc;border-bottom-color:#ccc;background:#fff"></div><svg style="position:absolute;left:1284px;top:353px;" width="11" height="10" viewBox="0 0 11 10"><path d="M1 5 L4 8.5 L10 1" stroke="#000" stroke-width="2" fill="none"/></svg><div class="t" style="left:1302px;top:349.5px;font-size:13px;line-height:17px;color:#000;font-weight:700;">描边</div><div style="left:1282px;top:372px;width:15px;height:15px;border:1px solid #666;border-right-color:#ccc;border-bottom-color:#ccc;background:#fff"></div><svg style="position:absolute;left:1284px;top:375px;" width="11" height="10" viewBox="0 0 11 10"><path d="M1 5 L4 8.5 L10 1" stroke="#000" stroke-width="2" fill="none"/></svg><div class="t" style="left:1302px;top:371.5px;font-size:13px;line-height:17px;color:#000;font-weight:700;">捕捉光标</div><div style="left:1282px;top:394px;width:15px;height:15px;border:1px solid #666;border-right-color:#ccc;border-bottom-color:#ccc;background:#fff"></div><div class="t" style="left:1302px;top:393.5px;font-size:13px;line-height:17px;color:#000;font-weight:700;letter-spacing:-0.4px">Explorer 2.0 兼容</div><div class="t" style="left:1280px;top:414.5px;font-size:13px;line-height:17px;color:#000;font-weight:700;">录制比例:</div><div style="left:1347px;top:415px;width:58px;height:16px;border:1px solid #000;border-right-width:2px;border-bottom-width:2px;background:#fff"></div><div class="t" style="left:999px;width:400px;text-align:right;top:415.0px;font-size:12px;line-height:16px;color:#000;font-weight:700;">100%▼</div><div style="left:992px;top:785px;width:1px;height:25px;background:#ccc"></div><div style="left:1023px;top:785px;width:1px;height:25px;background:#ccc"></div><div style="left:1051px;top:785px;width:1px;height:25px;background:#ccc"></div><div style="left:1028px;top:793px;width:8px;height:8px;background:#bbb;border-radius:50%"></div><div style="left:1038px;top:796px;width:4px;height:3px;background:#bbb;border-radius:50%"></div><div style="left:1044px;top:796px;width:4px;height:3px;background:#bbb;border-radius:50%"></div><div style="left:1055px;top:786px;width:35px;height:25px;border:1px solid #bbb;border-radius:3px;background:#fff"></div><svg style="position:absolute;left:1064px;top:790px;" width="16" height="16" viewBox="0 0 16 16"><rect x="1" y="4" width="5" height="11" fill="#222"/><rect x="10" y="4" width="5" height="11" fill="#222"/><rect x="4" y="6" width="8" height="4" fill="#222"/><rect x="2" y="1" width="3" height="4" fill="#444"/><rect x="11" y="1" width="3" height="4" fill="#444"/><rect x="2" y="9" width="2" height="5" fill="#ddd"/><rect x="11" y="9" width="2" height="5" fill="#ddd"/></svg><div class="t" style="left:1095px;top:791.0px;font-size:11px;line-height:14px;color:#333;font-weight:400;">选择了 1 项</div><div style="left:1178px;top:789px;width:158px;height:20px;border:1px solid #c8c8c8;background:#fff"></div><div style="left:1320px;top:790px;width:15px;height:18px;border-left:1px solid #ccc"></div><svg style="position:absolute;left:1323px;top:796px;" width="9" height="6" viewBox="0 0 9 6"><path d="M0 0H8L4 6Z" fill="#555"/></svg><div class="t" style="left:1184px;top:791.5px;font-size:11px;line-height:14px;color:#333;font-weight:400;">全部</div><div style="left:21.0px;top:815.0px;width:34px;height:18px;border-radius:50%;background:#ccffff"></div><div style="left:24.0px;top:817.0px;width:28px;height:14px;border-radius:50%;background:#ccccff"></div><div style="left:26.0px;top:819.0px;width:24px;height:10px;border-radius:50%;background:#99cccc"></div><div style="left:29.0px;top:821.0px;width:18px;height:6px;border-radius:50%;background:#9999bb"></div><div style="left:85.0px;top:815.0px;width:56px;height:18px;border-radius:50%;background:#ccffff"></div><div style="left:88.0px;top:817.0px;width:50px;height:14px;border-radius:50%;background:#ccccff"></div><div style="left:90.0px;top:819.0px;width:46px;height:10px;border-radius:50%;background:#99cccc"></div><div style="left:93.0px;top:821.0px;width:40px;height:6px;border-radius:50%;background:#9999bb"></div><div style="left:161.0px;top:815.0px;width:52px;height:18px;border-radius:50%;background:#ccffff"></div><div style="left:164.0px;top:817.0px;width:46px;height:14px;border-radius:50%;background:#ccccff"></div><div style="left:166.0px;top:819.0px;width:42px;height:10px;border-radius:50%;background:#99cccc"></div><div style="left:169.0px;top:821.0px;width:36px;height:6px;border-radius:50%;background:#9999bb"></div><div style="left:225.0px;top:815.0px;width:68px;height:18px;border-radius:50%;background:#ccffff"></div><div style="left:228.0px;top:817.0px;width:62px;height:14px;border-radius:50%;background:#ccccff"></div><div style="left:230.0px;top:819.0px;width:58px;height:10px;border-radius:50%;background:#99cccc"></div><div style="left:233.0px;top:821.0px;width:52px;height:6px;border-radius:50%;background:#9999bb"></div><div style="left:311.0px;top:815.0px;width:52px;height:18px;border-radius:50%;background:#ccffff"></div><div style="left:314.0px;top:817.0px;width:46px;height:14px;border-radius:50%;background:#ccccff"></div><div style="left:316.0px;top:819.0px;width:42px;height:10px;border-radius:50%;background:#99cccc"></div><div style="left:319.0px;top:821.0px;width:36px;height:6px;border-radius:50%;background:#9999bb"></div><div style="left:379.0px;top:815.0px;width:67px;height:18px;border-radius:50%;background:#ccffff"></div><div style="left:382.0px;top:817.0px;width:61px;height:14px;border-radius:50%;background:#ccccff"></div><div style="left:384.0px;top:819.0px;width:57px;height:10px;border-radius:50%;background:#99cccc"></div><div style="left:387.0px;top:821.0px;width:51px;height:6px;border-radius:50%;background:#9999bb"></div><div style="left:454.0px;top:815.0px;width:69px;height:18px;border-radius:50%;background:#ccffff"></div><div style="left:457.0px;top:817.0px;width:63px;height:14px;border-radius:50%;background:#ccccff"></div><div style="left:459.0px;top:819.0px;width:59px;height:10px;border-radius:50%;background:#99cccc"></div><div style="left:462.0px;top:821.0px;width:53px;height:6px;border-radius:50%;background:#9999bb"></div><div style="left:3.0px;top:832.0px;width:66px;height:18px;border-radius:50%;background:#ccffff"></div><div style="left:6.0px;top:834.0px;width:60px;height:14px;border-radius:50%;background:#ccccff"></div><div style="left:8.0px;top:836.0px;width:56px;height:10px;border-radius:50%;background:#99cccc"></div><div style="left:11.0px;top:838.0px;width:50px;height:6px;border-radius:50%;background:#9999bb"></div><div style="left:154.0px;top:832.0px;width:63px;height:18px;border-radius:50%;background:#ccffff"></div><div style="left:157.0px;top:834.0px;width:57px;height:14px;border-radius:50%;background:#ccccff"></div><div style="left:159.0px;top:836.0px;width:53px;height:10px;border-radius:50%;background:#99cccc"></div><div style="left:162.0px;top:838.0px;width:47px;height:6px;border-radius:50%;background:#9999bb"></div><div style="left:223.0px;top:832.0px;width:78px;height:18px;border-radius:50%;background:#ccffff"></div><div style="left:226.0px;top:834.0px;width:72px;height:14px;border-radius:50%;background:#ccccff"></div><div style="left:228.0px;top:836.0px;width:68px;height:10px;border-radius:50%;background:#99cccc"></div><div style="left:231.0px;top:838.0px;width:62px;height:6px;border-radius:50%;background:#9999bb"></div><div style="left:304.0px;top:832.0px;width:69px;height:18px;border-radius:50%;background:#ccffff"></div><div style="left:307.0px;top:834.0px;width:63px;height:14px;border-radius:50%;background:#ccccff"></div><div style="left:309.0px;top:836.0px;width:59px;height:10px;border-radius:50%;background:#99cccc"></div><div style="left:312.0px;top:838.0px;width:53px;height:6px;border-radius:50%;background:#9999bb"></div><div style="left:375.0px;top:832.0px;width:76px;height:18px;border-radius:50%;background:#ccffff"></div><div style="left:378.0px;top:834.0px;width:70px;height:14px;border-radius:50%;background:#ccccff"></div><div style="left:380.0px;top:836.0px;width:66px;height:10px;border-radius:50%;background:#99cccc"></div><div style="left:383.0px;top:838.0px;width:60px;height:6px;border-radius:50%;background:#9999bb"></div><div style="left:460.0px;top:832.0px;width:55px;height:18px;border-radius:50%;background:#ccffff"></div><div style="left:463.0px;top:834.0px;width:49px;height:14px;border-radius:50%;background:#ccccff"></div><div style="left:465.0px;top:836.0px;width:45px;height:10px;border-radius:50%;background:#99cccc"></div><div style="left:468.0px;top:838.0px;width:39px;height:6px;border-radius:50%;background:#9999bb"></div><div style="left:1370.0px;top:815.0px;width:35px;height:18px;border-radius:50%;background:#ccffff"></div><div style="left:1373.0px;top:817.0px;width:29px;height:14px;border-radius:50%;background:#ccccff"></div><div style="left:1375.0px;top:819.0px;width:25px;height:10px;border-radius:50%;background:#99cccc"></div><div style="left:1378.0px;top:821.0px;width:19px;height:6px;border-radius:50%;background:#9999bb"></div><div style="left:0;top:0;width:1260px;height:21px;overflow:hidden"><div style="left:321.0px;top:9.0px;width:40px;height:18px;border-radius:50%;background:#ccffff"></div><div style="left:324.0px;top:11.0px;width:34px;height:14px;border-radius:50%;background:#ccccff"></div><div style="left:326.0px;top:13.0px;width:30px;height:10px;border-radius:50%;background:#99cccc"></div><div style="left:329.0px;top:15.0px;width:24px;height:6px;border-radius:50%;background:#9999bb"></div><div style="left:623.0px;top:8.0px;width:36px;height:18px;border-radius:50%;background:#ccffff"></div><div style="left:626.0px;top:10.0px;width:30px;height:14px;border-radius:50%;background:#ccccff"></div><div style="left:628.0px;top:12.0px;width:26px;height:10px;border-radius:50%;background:#99cccc"></div><div style="left:631.0px;top:14.0px;width:20px;height:6px;border-radius:50%;background:#9999bb"></div><div style="left:417px;top:15px;width:10px;height:14px;border-radius:50%;background:#ccffff"></div><div style="left:466px;top:12px;width:20px;height:14px;border-radius:50%;background:#ccffff"></div><div style="left:501px;top:12px;width:11px;height:14px;border-radius:50%;background:#ccffff"></div></div><div style="left:1066.0px;top:815.0px;width:28px;height:22px;border-radius:50%;background:#ccffff"></div><div style="left:1069.0px;top:817.0px;width:22px;height:18px;border-radius:50%;background:#ccccff"></div><div style="left:1071.0px;top:819.0px;width:18px;height:14px;border-radius:50%;background:#99cccc"></div><div style="left:1074.0px;top:821.0px;width:12px;height:10px;border-radius:50%;background:#9999bb"></div><div style="left:1108.0px;top:815.0px;width:36px;height:22px;border-radius:50%;background:#ccffff"></div><div style="left:1111.0px;top:817.0px;width:30px;height:18px;border-radius:50%;background:#ccccff"></div><div style="left:1113.0px;top:819.0px;width:26px;height:14px;border-radius:50%;background:#99cccc"></div><div style="left:1116.0px;top:821.0px;width:20px;height:10px;border-radius:50%;background:#9999bb"></div><div style="left:1071px;top:818px;width:22px;height:18px;border-radius:40%;background:#ffccff"></div><div style="left:1110px;top:818px;width:32px;height:18px;border-radius:30%;background:#ccffff"></div><div style="left:1114px;top:821px;width:24px;height:12px;border-radius:30%;background:#99cccc"></div><div style="left:1076px;top:822px;width:12px;height:10px;border-radius:40%;background:#cccccc"></div><div style="left:520px;top:829px;width:401px;height:40px;border:1px solid #888;border-radius:14px 20px 20px 14px/20px;background:#fff"></div><svg style="position:absolute;left:546px;top:835px;" width="34" height="19" viewBox="0 0 34 19"><circle cx="12" cy="7" r="6" stroke="#0a3ab0" stroke-width="2.2" fill="#fff"/><path d="M9 7H15M12 4V10" stroke="#0a2a90" stroke-width="1.8"/><path d="M8 11.5 L3 16.5" stroke="#2a2a90" stroke-width="3"/><path d="M24 8.5H31L27.5 12Z" fill="#0a4ad0"/></svg><svg style="position:absolute;left:606px;top:836px;" width="20" height="18" viewBox="0 0 20 18"><rect x="6" y="5.5" width="8" height="7" stroke="#0a3ab0" stroke-width="2" fill="#fff"/><path d="M6 11.5H14V13H6Z" fill="#0a2a90"/><path d="M7 1H13L10 3Z M7 17H13L10 15Z M1 6V12L3.5 9Z M19 6V12L16.5 9Z" fill="#0a3ab0"/></svg><div style="left:647px;top:832px;width:56px;height:27px;border:1px solid #666;border-radius:13px 0 0 13px;background:linear-gradient(#ffffff 0,#ccffff 12%,#ccffff 22%,#ccccff 28%,#ccccff 42%,#99cccc 42%,#99cccc 48%,#cccccc 48%,#cccccc 88%,#ccccff 88%)"></div><div style="left:737px;top:832px;width:55px;height:27px;border:1px solid #666;border-radius:0 13px 13px 0;background:linear-gradient(#ffffff 0,#ccffff 12%,#ccffff 22%,#ccccff 28%,#ccccff 42%,#99cccc 42%,#99cccc 48%,#cccccc 48%,#cccccc 88%,#ccccff 88%)"></div><svg style="position:absolute;left:664px;top:838px;" width="13" height="13" viewBox="0 0 13 13"><rect x="0" y="1" width="3" height="11" rx="1" fill="#669999"/><path d="M13 1V12L4 6.5Z" fill="#669999"/></svg><svg style="position:absolute;left:761px;top:838px;" width="13" height="13" viewBox="0 0 13 13"><rect x="10" y="1" width="3" height="11" rx="1" fill="#669999"/><path d="M0 1V12L9 6.5Z" fill="#669999"/></svg><div style="left:696px;top:820px;width:48px;height:48px;border-radius:50%;background:#fff;border:1px solid #999"></div><div style="left:700px;top:823px;width:40px;height:40px;border-radius:50%;background:linear-gradient(#3333cc 0,#9999cc 12%,#6699cc 25%,#6666cc 40%,#0000cc 60%,#000099 80%,#0066ff 100%);border:1px solid #0000aa"></div><div style="left:709px;top:835px;width:22px;height:20px;background:#fff;border-radius:3px;border:1px solid #ccc"></div><div style="left:712px;top:839px;width:16px;height:11px;background:linear-gradient(#ccffff 0,#ccffff 40%,#66cc99 60%,#339966 100%);border:1px solid #6699cc"></div><svg style="position:absolute;left:808px;top:836px;" width="20" height="18" viewBox="0 0 20 18"><path d="M5 3 A6 6 0 1 1 4 13" stroke="#1a4aa0" stroke-width="2.8" fill="none"/><path d="M2 0 L9 3 L2 8Z" fill="#1a4aa0"/></svg><svg style="position:absolute;left:841px;top:836px;" width="20" height="18" viewBox="0 0 20 18"><path d="M14 3 A6 6 0 1 0 15 13" stroke="#1a4aa0" stroke-width="2.8" fill="none"/><path d="M17 0 L10 3 L17 8Z" fill="#1a4aa0"/></svg><div style="left:874px;top:835px;width:1px;height:18px;background:#ccc"></div><svg style="position:absolute;left:888px;top:837px;" width="16" height="15" viewBox="0 0 16 15"><path d="M1 1L15 14M15 1L1 14" stroke="#cc1a1a" stroke-width="2.5"/></svg><svg style="position:absolute;left:100px;top:62px;" width="15" height="15" viewBox="0 0 15 15"><rect x="0.5" y="0.5" width="14" height="14" fill="#99ccff"/><rect x="2" y="2" width="11" height="11" fill="#ccffcc"/><rect x="3" y="3" width="9" height="9" fill="#99cc33"/><rect x="3" y="3" width="9" height="5" fill="#cccc33"/><rect x="5" y="3" width="7" height="6" fill="#66ccdd"/><rect x="3" y="12" width="10" height="2" fill="#99cc99"/></svg><svg style="position:absolute;left:125px;top:62px;" width="13" height="15" viewBox="0 0 13 15"><path d="M1 1H8L12 5V14H1Z" fill="#fff" stroke="#888" stroke-width="1.2"/><path d="M8 1V5H12" fill="#ffffaa" stroke="#aaa"/></svg><svg style="position:absolute;left:144px;top:62px;" width="17" height="15" viewBox="0 0 17 15"><path d="M1 6H6L7 7H12V14H1Z" fill="#ffee88" stroke="#777" stroke-width="0.8"/><path d="M3 9H15L12 14H1Z" fill="#ffcc55" stroke="#8a7a40" stroke-width="0.8"/><path d="M6 4 Q9 0 13 3" stroke="#333" stroke-width="1.3" fill="none"/><path d="M11 1L15 4L12 6Z" fill="#222"/></svg><svg style="position:absolute;left:166px;top:63px;" width="15" height="14" viewBox="0 0 15 14"><rect x="1" y="0.5" width="13" height="13" rx="1" fill="#c8c8c8"/><rect x="4" y="1" width="6" height="6" fill="#fff"/><rect x="0" y="6" width="1" height="4" fill="#aaa"/></svg><svg style="position:absolute;left:186px;top:61px;" width="16" height="16" viewBox="0 0 16 16"><rect x="1" y="1" width="8" height="6" fill="#ffff99" stroke="#9a9a40" stroke-width="0.8"/><path d="M4 7V12" stroke="#222" stroke-width="1.2"/><path d="M2 9H6" stroke="#222" stroke-width="1"/><rect x="6" y="7" width="9" height="8" fill="#ffee66" stroke="#8a8a40" stroke-width="0.8"/><path d="M8 12L10 13L13 9" stroke="#cc0000" stroke-width="1.5" fill="none"/></svg><svg style="position:absolute;left:208px;top:64px;" width="15" height="11" viewBox="0 0 15 11"><path d="M3 6 Q7 0 12 4 Q14 7 11 10" stroke="#a0a0a0" stroke-width="1.6" fill="none"/><path d="M0 7L5 3L6 9Z" fill="#a0a0a0"/></svg><svg style="position:absolute;left:228px;top:67px;" width="6" height="4" viewBox="0 0 6 4"><path d="M0 0H5L2.5 3Z" fill="#a8a8a8"/></svg><svg style="position:absolute;left:241px;top:64px;" width="15" height="11" viewBox="0 0 15 11"><path d="M12 6 Q8 0 3 4 Q1 7 4 10" stroke="#a0a0a0" stroke-width="1.6" fill="none"/><path d="M15 7L10 3L9 9Z" fill="#a0a0a0"/></svg><svg style="position:absolute;left:263px;top:67px;" width="6" height="4" viewBox="0 0 6 4"><path d="M0 0H5L2.5 3Z" fill="#a8a8a8"/></svg><svg style="position:absolute;left:275px;top:62px;" width="15" height="15" viewBox="0 0 15 15"><rect x="1" y="1" width="3" height="3" fill="#ccffff" stroke="#4a8a8a" stroke-width="0.8"/><rect x="1" y="6" width="3" height="3" fill="#ccffff" stroke="#4a8a8a" stroke-width="0.8"/><rect x="1" y="11" width="3" height="3" fill="#ccffff" stroke="#4a8a8a" stroke-width="0.8"/><path d="M6 9H14M6 11.5H14M6 14H14" stroke="#888" stroke-width="0.8"/><path d="M7 5 Q9 1 12 3" stroke="#1a4ab0" stroke-width="1.6" fill="none"/><path d="M8 6 Q11 8 13 5" stroke="#1a4ab0" stroke-width="1.6" fill="none"/></svg><svg style="position:absolute;left:297px;top:62px;" width="15" height="15" viewBox="0 0 15 15"><path d="M1 3V14H10" stroke="#b4b4b4" stroke-width="1" fill="none"/><path d="M1 3H9L11 1" stroke="#b4b4b4" stroke-width="1" fill="none"/><path d="M6 13L13 5L15 7L8 14Z" fill="#a8a8a8"/></svg><svg style="position:absolute;left:317px;top:62px;" width="16" height="15" viewBox="0 0 16 15"><rect x="0.5" y="0.5" width="15" height="14" fill="#eef" stroke="#99ccff"/><rect x="6" y="2" width="4" height="4" fill="#3399ff"/><rect x="2" y="9" width="4" height="4" fill="#3399ff"/><rect x="10" y="9" width="4" height="4" fill="#3399ff"/><path d="M8 6V9M4 9V8H12V9" stroke="#cc9933" stroke-width="1.2" fill="none"/><rect x="1" y="13" width="14" height="1.5" fill="#ccee99"/></svg><svg style="position:absolute;left:338px;top:62px;" width="15" height="14" viewBox="0 0 15 14"><rect x="0.5" y="0.5" width="6" height="5" fill="#fff" stroke="#888"/><rect x="8.5" y="0.5" width="6" height="5" fill="#fff" stroke="#888"/><rect x="0.5" y="8.5" width="6" height="5" fill="#fff" stroke="#888"/><rect x="4.5" y="4.5" width="7" height="6" fill="#fff" stroke="#3355aa"/><rect x="5" y="5" width="6" height="1.5" fill="#3366cc"/></svg><svg style="position:absolute;left:360px;top:67px;" width="6" height="4" viewBox="0 0 6 4"><path d="M0 0H5L2.5 3Z" fill="#222"/></svg><svg style="position:absolute;left:371px;top:62px;" width="16" height="15" viewBox="0 0 16 15"><path d="M1 5H6L7 6H14V14H1Z" fill="#ffff77" stroke="#8a8a30" stroke-width="0.8"/><path d="M1 8H14" stroke="#dddd55"/><path d="M10 4 Q11 1 14 2" stroke="#333" stroke-width="1.2" fill="none"/><path d="M9 2L11 5L12 1Z" fill="#333"/></svg><div style="left:391px;top:59px;width:1px;height:22px;background:#ccc"></div><svg style="position:absolute;left:399px;top:66px;" width="8" height="7" viewBox="0 0 8 7"><rect x="0" y="0" width="7" height="1.2" fill="#333"/><path d="M0 2.5H7L3.5 6.5Z" fill="#333"/></svg><svg style="position:absolute;left:106px;top:113px;" width="30" height="32" viewBox="0 0 30 32"><rect x="1.5" y="3.5" width="6" height="6" fill="#fff" stroke="#666" stroke-width="0.8"/><path d="M1.5 3.5L3.5 1.5H9.5V7.5L7.5 9.5" fill="#66dddd" stroke="#666" stroke-width="0.8"/><rect x="2" y="4" width="5" height="4" fill="#bff"/><rect x="1.5" y="13.5" width="6" height="6" fill="#fff" stroke="#666" stroke-width="0.8"/><path d="M1.5 13.5L3.5 11.5H9.5V17.5L7.5 19.5" fill="#66dddd" stroke="#666" stroke-width="0.8"/><rect x="2" y="14" width="5" height="4" fill="#bff"/><rect x="1.5" y="23.5" width="6" height="6" fill="#fff" stroke="#666" stroke-width="0.8"/><path d="M1.5 23.5L3.5 21.5H9.5V27.5L7.5 29.5" fill="#66dddd" stroke="#666" stroke-width="0.8"/><rect x="2" y="24" width="5" height="4" fill="#bff"/><path d="M15 6 Q14 2 19 2" stroke="#0a3aa0" stroke-width="2" fill="none"/><path d="M12 6H18L15 10Z" fill="#0a3aa0"/><path d="M27 8 Q28 14 22 14" stroke="#0a3aa0" stroke-width="2" fill="none"/><path d="M24 9H30L27 5Z" fill="#0a3aa0"/><path d="M12 17H27M12 20H27M12 23H27" stroke="#999" stroke-width="1"/></svg><svg style="position:absolute;left:149px;top:115px;" width="15" height="15" viewBox="0 0 15 15"><path d="M1 1H7L9 3V9H1Z" fill="#fff" stroke="#b0b0b0"/><path d="M6 5H11L13 7V14H6Z" fill="#fff" stroke="#b0b0b0"/><path d="M3 4H6M8 10H11M8 12H11" stroke="#b0b0b0"/></svg><svg style="position:absolute;left:149px;top:139px;" width="15" height="14" viewBox="0 0 15 14"><rect x="1" y="1" width="9" height="12" rx="1" fill="#c4c4c4"/><path d="M7 5H11L13 7V14H7Z" fill="#fff" stroke="#b0b0b0"/><path d="M8 9H12M8 11H12" stroke="#b0b0b0"/></svg><svg style="position:absolute;left:150px;top:164px;" width="14" height="13" viewBox="0 0 14 13"><path d="M2 2L12 12M12 1L2 12" stroke="#9a9a9a" stroke-width="1.6"/></svg><svg style="position:absolute;left:212px;top:115px;" width="16" height="15" viewBox="0 0 16 15"><ellipse cx="5" cy="8" rx="4.5" ry="2.5" fill="#66dddd" stroke="#558"/><circle cx="12" cy="4" r="3.5" fill="#3388ff" stroke="#225"/><path d="M7 9 Q10 6 12 10 Q12 14 8 14 Q5 13 7 9Z" fill="#cc9933" stroke="#654"/></svg><svg style="position:absolute;left:212px;top:138px;" width="17" height="16" viewBox="0 0 17 16"><rect x="1" y="1" width="11" height="10" fill="#ccffff" stroke="#333" stroke-width="0.8"/><rect x="1" y="2" width="1.5" height="8" fill="#dd4422"/><path d="M4 4L9 9M9 6V9H6" stroke="#000" stroke-width="1.3" fill="none"/><rect x="8" y="8" width="8" height="7" fill="#22cccc" stroke="#333" stroke-width="0.8"/><rect x="11" y="0.5" width="2" height="8" fill="#333"/></svg><svg style="position:absolute;left:212px;top:162px;" width="17" height="16" viewBox="0 0 17 16"><rect x="1" y="1" width="13" height="13" fill="#ffff66" stroke="#444" stroke-width="0.8"/><rect x="4" y="3" width="8" height="8" fill="#ccffff"/><path d="M5 4L10 9M10 6V9H7" stroke="#000" stroke-width="1.3" fill="none"/><rect x="10" y="7" width="6" height="8" fill="#229999" stroke="#333" stroke-width="0.6"/><path d="M14 1V7" stroke="#228888" stroke-width="2"/></svg><svg style="position:absolute;left:306px;top:119px;" width="30" height="21" viewBox="0 0 30 21"><path d="M11 2H28L21 18H3Z" fill="none" stroke="#996633" stroke-width="2.4"/></svg><svg style="position:absolute;left:343px;top:113px;" width="14" height="20" viewBox="0 0 14 20"><path d="M11 2L2 17" stroke="#aa6633" stroke-width="2" stroke-dasharray="3 2"/></svg><svg style="position:absolute;left:342px;top:139px;" width="16" height="16" viewBox="0 0 16 16"><path d="M4.5 0.5L9.5 5.5M9.5 0.5L4.5 5.5" stroke="#aa6633" stroke-width="1.4"/><path d="M0.5 8.5L5.5 13.5M5.5 8.5L0.5 13.5" stroke="#aa6633" stroke-width="1.4"/><path d="M9.5 7.5L14.5 12.5M14.5 7.5L9.5 12.5" stroke="#aa6633" stroke-width="1.4"/></svg><svg style="position:absolute;left:342px;top:162px;" width="16" height="17" viewBox="0 0 16 17"><path d="M2 8H15M10 1L4 15M3 2L13 14" stroke="#aa6633" stroke-width="1.2"/><text x="0" y="5" font-size="5" fill="#555">Y</text><text x="12" y="10" font-size="5" fill="#555">X</text><text x="0" y="16" font-size="5" fill="#555">Z</text></svg><svg style="position:absolute;left:400px;top:116px;" width="28" height="28" viewBox="0 0 28 28"><rect x="2" y="1" width="1" height="1" fill="#99ccdd"/><rect x="2" y="5" width="1" height="1" fill="#99ccdd"/><rect x="2" y="9" width="1" height="1" fill="#99ccdd"/><rect x="2" y="13" width="1" height="1" fill="#99ccdd"/><rect x="2" y="17" width="1" height="1" fill="#99ccdd"/><rect x="2" y="21" width="1" height="1" fill="#99ccdd"/><rect x="2" y="25" width="1" height="1" fill="#99ccdd"/><rect x="6" y="1" width="1" height="1" fill="#99ccdd"/><rect x="6" y="5" width="1" height="1" fill="#99ccdd"/><rect x="6" y="9" width="1" height="1" fill="#99ccdd"/><rect x="6" y="13" width="1" height="1" fill="#99ccdd"/><rect x="6" y="17" width="1" height="1" fill="#99ccdd"/><rect x="6" y="21" width="1" height="1" fill="#99ccdd"/><rect x="6" y="25" width="1" height="1" fill="#99ccdd"/><rect x="10" y="1" width="1" height="1" fill="#99ccdd"/><rect x="10" y="5" width="1" height="1" fill="#99ccdd"/><rect x="10" y="9" width="1" height="1" fill="#99ccdd"/><rect x="10" y="13" width="1" height="1" fill="#99ccdd"/><rect x="10" y="17" width="1" height="1" fill="#99ccdd"/><rect x="10" y="21" width="1" height="1" fill="#99ccdd"/><rect x="10" y="25" width="1" height="1" fill="#99ccdd"/><rect x="14" y="1" width="1" height="1" fill="#99ccdd"/><rect x="14" y="5" width="1" height="1" fill="#99ccdd"/><rect x="14" y="9" width="1" height="1" fill="#99ccdd"/><rect x="14" y="13" width="1" height="1" fill="#99ccdd"/><rect x="14" y="17" width="1" height="1" fill="#99ccdd"/><rect x="14" y="21" width="1" height="1" fill="#99ccdd"/><rect x="14" y="25" width="1" height="1" fill="#99ccdd"/><rect x="18" y="1" width="1" height="1" fill="#99ccdd"/><rect x="18" y="5" width="1" height="1" fill="#99ccdd"/><rect x="18" y="9" width="1" height="1" fill="#99ccdd"/><rect x="18" y="13" width="1" height="1" fill="#99ccdd"/><rect x="18" y="17" width="1" height="1" fill="#99ccdd"/><rect x="18" y="21" width="1" height="1" fill="#99ccdd"/><rect x="18" y="25" width="1" height="1" fill="#99ccdd"/><rect x="22" y="1" width="1" height="1" fill="#99ccdd"/><rect x="22" y="5" width="1" height="1" fill="#99ccdd"/><rect x="22" y="9" width="1" height="1" fill="#99ccdd"/><rect x="22" y="13" width="1" height="1" fill="#99ccdd"/><rect x="22" y="17" width="1" height="1" fill="#99ccdd"/><rect x="22" y="21" width="1" height="1" fill="#99ccdd"/><rect x="22" y="25" width="1" height="1" fill="#99ccdd"/><rect x="26" y="1" width="1" height="1" fill="#99ccdd"/><rect x="26" y="5" width="1" height="1" fill="#99ccdd"/><rect x="26" y="9" width="1" height="1" fill="#99ccdd"/><rect x="26" y="13" width="1" height="1" fill="#99ccdd"/><rect x="26" y="17" width="1" height="1" fill="#99ccdd"/><rect x="26" y="21" width="1" height="1" fill="#99ccdd"/><rect x="26" y="25" width="1" height="1" fill="#99ccdd"/><path d="M2 16 Q6 0 13 10 T26 12" stroke="#1a4aa0" stroke-width="2" fill="none"/></svg><svg style="position:absolute;left:441px;top:116px;" width="28" height="27" viewBox="0 0 28 27"><path d="M14 1H27V13M14 1L3 12M27 13L14 25" stroke="#999" stroke-width="0.8" stroke-dasharray="2 1.5" fill="none"/><path d="M14 1H26V13" fill="#ccffff"/><path d="M14 1H26V13" stroke="#555" stroke-width="1.2" fill="none"/><rect x="2.5" y="13.5" width="12" height="12" fill="#99ffff" stroke="#888" stroke-width="1"/></svg><svg style="position:absolute;left:475px;top:115px;" width="16" height="17" viewBox="0 0 16 17"><circle cx="4" cy="8" r="3" fill="#fff" stroke="#2a8a8a" stroke-width="1.2"/><circle cx="11" cy="8" r="3.5" fill="#fff" stroke="#2a8a8a" stroke-width="1.2"/><path d="M7 1V16" stroke="#333" stroke-width="1" stroke-dasharray="2 1"/></svg><svg style="position:absolute;left:475px;top:139px;" width="16" height="17" viewBox="0 0 16 17"><path d="M2 4L6 1L14 9L14 14H6L2 8Z" fill="#ccffff" stroke="#333" stroke-width="0.9"/><path d="M2 4L6 1L7 4Z" fill="#22cccc"/><path d="M5 6L13 14H7Z" fill="#bbbbbb"/></svg><svg style="position:absolute;left:475px;top:162px;" width="16" height="17" viewBox="0 0 16 17"><path d="M3 13 Q4 6 12 2" stroke="#aaa" stroke-width="1" fill="none"/><path d="M4 14L12 7L15 2H11L3 10Z" fill="#c4c4c4"/><rect x="10" y="1" width="5" height="5" fill="#ccffff" stroke="#22aaaa" stroke-width="1.2"/><circle cx="4" cy="13" r="3" fill="#ccffff" stroke="#22aaaa" stroke-width="1.4"/></svg><svg style="position:absolute;left:548px;top:117px;" width="16" height="13" viewBox="0 0 16 13"><path d="M1 1H15V12H1Z" fill="#99eeff"/><path d="M4 1L6 4V11H10V4L12 1" stroke="#445" stroke-width="1" fill="#fff"/><path d="M2 3L5 6M11 4L14 8" stroke="#ccffff" stroke-width="1"/></svg><svg style="position:absolute;left:549px;top:139px;" width="16" height="16" viewBox="0 0 16 16"><path d="M2 4 Q8 0 13 6 L13 12 L10 14 Q9 9 2 6Z" fill="#99ffff" stroke="#333" stroke-width="0.8"/><path d="M10 14L13 12V15Z" fill="#aaa"/></svg><svg style="position:absolute;left:549px;top:163px;" width="16" height="16" viewBox="0 0 16 16"><path d="M2 3L8 2L14 9L11 14L6 6Z" fill="#99ffff" stroke="#333" stroke-width="0.8"/><path d="M11 14L14 9V13Z" fill="#aaa"/></svg><svg style="position:absolute;left:618px;top:114px;" width="15" height="17" viewBox="0 0 15 17"><path d="M2 9H8L12 3L9 1L5 7H2Z" fill="#99ffff" stroke="#333" stroke-width="0.8"/><path d="M5 15 L13 9 L10 3" fill="#66dddd" stroke="#2a8a8a" stroke-width="0.9"/><path d="M1 15H7V9" stroke="#cc9" stroke-width="1" fill="none"/></svg><svg style="position:absolute;left:617px;top:140px;" width="15" height="14" viewBox="0 0 15 14"><rect x="1" y="1" width="12" height="12" rx="1.5" fill="#ddd" stroke="#777" stroke-width="0.9"/><rect x="3.5" y="3" width="7" height="7.5" fill="#99ffff" stroke="#444" stroke-width="0.8"/></svg><svg style="position:absolute;left:617px;top:162px;" width="17" height="17" viewBox="0 0 17 17"><path d="M1 6L6 1H16V11L11 16H1Z" fill="none" stroke="#888" stroke-width="0.8" stroke-dasharray="2 1"/><rect x="5" y="6" width="6" height="6" fill="#99ffff"/><path d="M1 16V6H11V16M11 6L16 1" stroke="#666" stroke-width="0.8" fill="none"/></svg><svg style="position:absolute;left:683px;top:116px;" width="28" height="28" viewBox="0 0 28 28"><path d="M1.5 8L8 1.5H26.5V20L20 26.5H1.5Z" fill="#fff" stroke="#c4c4c4" stroke-width="1"/><path d="M20 8H26.5V20L20 26.5Z" fill="#cccccc"/><path d="M1.5 8H20V26.5" stroke="#c4c4c4" fill="none"/><text x="6" y="15" font-size="6" fill="#999">✕</text><text x="12" y="15" font-size="6" fill="#999">✕</text><text x="6" y="22" font-size="6" fill="#999">✕</text><text x="12" y="22" font-size="6" fill="#999">✕</text></svg><svg style="position:absolute;left:717px;top:114px;" width="15" height="17" viewBox="0 0 15 17"><path d="M1 1 Q6 3 6 8 Q6 13 1 15M14 1 Q9 3 9 8 Q9 13 14 15M7.5 0V16" stroke="#b0b0b0" stroke-width="1" fill="none"/></svg><svg style="position:absolute;left:717px;top:138px;" width="16" height="16" viewBox="0 0 16 16"><path d="M8 1H15V9L12 12 Q8 15 3 14 Q1 11 2 8 L6 5Z" fill="none" stroke="#b4b4b4" stroke-width="1"/></svg><svg style="position:absolute;left:721px;top:162px;" width="12" height="12" viewBox="0 0 12 12"><path d="M1 1H8V5L10 7V10 M1 1L4 4" stroke="#b4b4b4" stroke-width="1" fill="none"/></svg><svg style="position:absolute;left:767px;top:115px;" width="11" height="15" viewBox="0 0 11 15"><path d="M1 1H10V14H1" stroke="#b0b0b0" stroke-width="1" fill="none"/><path d="M3 7H7" stroke="#777" stroke-width="1"/><path d="M6 5L8.5 7L6 9Z" fill="#555"/></svg><svg style="position:absolute;left:764px;top:139px;" width="15" height="15" viewBox="0 0 15 15"><path d="M1 1H4L6 4 Q4 6 7 8 Q3 10 6 13H14V1H8" stroke="#b0b0c0" stroke-width="1" fill="none"/><path d="M8 7L13 3M10 3H13V6" stroke="#555" stroke-width="1" fill="none"/></svg><svg style="position:absolute;left:767px;top:164px;" width="9" height="9" viewBox="0 0 9 9"><path d="M1 1L4 2L8 7" stroke="#999" stroke-width="1.3" fill="none"/></svg><svg style="position:absolute;left:809px;top:115px;" width="15" height="16" viewBox="0 0 15 16"><path d="M2 6 Q5 0 8 4 T14 3" stroke="#cc33cc" stroke-width="1.3" fill="none"/><path d="M1 12 Q4 6 7 10 T13 9" stroke="#cc33cc" stroke-width="1.3" fill="none"/><path d="M1 14H13V11" stroke="#bb44ee" stroke-width="1.6" fill="none"/></svg><svg style="position:absolute;left:809px;top:140px;" width="14" height="14" viewBox="0 0 14 14"><path d="M1.5 1H13M1.5 1V13H13" stroke="#b4b4b4" stroke-width="1.3" fill="none"/></svg><svg style="position:absolute;left:809px;top:163px;" width="15" height="14" viewBox="0 0 15 14"><path d="M1 4L5 1H8 Q9 4 12 3L14 1M4 4V13H12V4" stroke="#b0b0b0" stroke-width="1" fill="none"/></svg><svg style="position:absolute;left:877px;top:114px;" width="32" height="30" viewBox="0 0 32 30"><path d="M2 20 Q2 8 10 5 Q18 1 29 4 Q32 10 28 13 Q24 18 22 26 Q14 20 2 20Z" fill="#ccffff" stroke="#444" stroke-width="0.9"/><path d="M2 12 Q12 6 28 13M14 4 Q12 14 21 25" stroke="#444" stroke-width="0.9" fill="none"/><path d="M14 4 Q12 14 21 25 L28 13 Q32 10 29 4 Q20 2 14 4Z" fill="#99ffff"/><path d="M14 4 Q12 14 21 25M17 10 Q20 14 24 18" stroke="#1a8a8a" stroke-width="0.9" fill="none"/></svg><svg style="position:absolute;left:921px;top:115px;" width="14" height="14" viewBox="0 0 14 14"><rect x="1" y="1" width="12" height="12" fill="#ccffff" stroke="#229999" stroke-width="1.3"/><path d="M3 11L11 3M5 12L12 5M2 8L8 2" stroke="#fff" stroke-width="0.8"/></svg><svg style="position:absolute;left:919px;top:139px;" width="17" height="16" viewBox="0 0 17 16"><path d="M1 14 Q1 4 5 2 Q8 1 12 2 Q16 4 16 14 Q12 11 8.5 11 Q5 11 1 14Z" fill="#ccddff" stroke="#666" stroke-width="0.9"/><path d="M6 2V12M11 2V11" stroke="#99f" stroke-width="0.8" stroke-dasharray="1 1"/></svg><div style="left:921px;top:163px;width:15px;height:15px;border-radius:50%;background:radial-gradient(circle at 40% 35%,#fff 0,#fff 25%,#ccccff 60%,#99cccc 100%)"></div><svg style="position:absolute;left:983px;top:115px;" width="30" height="28" viewBox="0 0 30 28"><path d="M1.5 1V20M18.5 1V17" stroke="#222" stroke-width="1.2"/><path d="M3 6H17" stroke="#222" stroke-width="1.2"/><path d="M2 6L6 3V9Z M18 6L14 3V9Z" fill="#222"/><circle cx="3" cy="23" r="2.2" fill="#0a4ad0"/><circle cx="19" cy="20" r="2.2" fill="#0a4ad0"/><circle cx="27" cy="25" r="2.2" fill="#0a4ad0"/></svg><svg style="position:absolute;left:1017px;top:114px;" width="16" height="17" viewBox="0 0 16 17"><circle cx="8" cy="8.5" r="7" fill="none" stroke="#333" stroke-width="1"/><path d="M4 12.5L12 4.5" stroke="#000" stroke-width="1.2"/><path d="M3 14L4 9L8 13Z M13 3L12 8L8 4Z" fill="#000"/></svg><svg style="position:absolute;left:1017px;top:139px;" width="17" height="16" viewBox="0 0 17 16"><path d="M1 14L13 2M1 14H16" stroke="#555" stroke-width="1"/><path d="M9 5 Q13 8 12 13" stroke="#000" stroke-width="1.2" fill="none"/><path d="M10 13L12 15L14 12Z" fill="#000"/></svg><svg style="position:absolute;left:1017px;top:162px;" width="17" height="16" viewBox="0 0 17 16"><path d="M2 1V9M15 1V9M2 3L6 3L9 6L12 3H15" stroke="#333" stroke-width="1" fill="none"/><path d="M1 13 Q5 8 8 12 T16 12" stroke="#cc44dd" stroke-width="1.6" fill="none"/></svg><svg style="position:absolute;left:1074px;top:114px;" width="17" height="16" viewBox="0 0 17 16"><text x="0" y="14" font-size="17" font-family="Liberation Sans" fill="#222">d</text><path d="M10 7H16M10 10H16" stroke="#222" stroke-width="1.6"/></svg><svg style="position:absolute;left:1075px;top:139px;" width="15" height="15" viewBox="0 0 15 15"><path d="M4 1 Q1 1 1 3V12 Q1 14 4 14M11 1 Q14 1 14 3V12 Q14 14 11 14" stroke="#222" stroke-width="1.2" fill="none"/></svg><svg style="position:absolute;left:1075px;top:163px;" width="16" height="15" viewBox="0 0 16 15"><rect x="1" y="1" width="14" height="13" fill="#fff" stroke="#333" stroke-width="1"/><path d="M1 4.5H15M1 7.5H15M1 10.5H15M5.5 1V14M10 1V14" stroke="#444" stroke-width="0.7"/></svg><svg style="position:absolute;left:1132px;top:118px;" width="30" height="25" viewBox="0 0 30 25"><path d="M6 16L1 20L4 23H25L29 18Z" fill="#fff" stroke="#888" stroke-width="0.9"/><path d="M6 11L1 15L4 18H25L29 13Z" fill="#ffffdd" stroke="#888" stroke-width="0.9"/><path d="M6 4L1 9L4 12H25L29 6Z" fill="#ccffff" stroke="#888" stroke-width="0.9"/></svg><svg style="position:absolute;left:1167px;top:116px;" width="15" height="13" viewBox="0 0 15 13"><path d="M1 6 Q7 0 13 6 Q7 12 1 6Z" fill="#fff" stroke="#b0b0b0" stroke-width="1.1"/><rect x="5.5" y="3" width="3" height="6" fill="#b0b0b0"/><path d="M2 1L13 12" stroke="#b0b0b0" stroke-width="1.3"/></svg><svg style="position:absolute;left:1167px;top:140px;" width="15" height="13" viewBox="0 0 15 13"><path d="M1 6 Q7 0 13 6 Q7 12 1 6Z" fill="#fff" stroke="#b0b0b0" stroke-width="1.1"/><rect x="5.5" y="3" width="3" height="6" fill="#b0b0b0"/></svg><svg style="position:absolute;left:1190px;top:144.5px;" width="6" height="4" viewBox="0 0 6 4"><path d="M0 0H5L2.5 3Z" fill="#333"/></svg><svg style="position:absolute;left:1167px;top:163px;" width="15" height="15" viewBox="0 0 15 15"><path d="M1 5 Q7 -1 13 5 Q7 11 1 5Z" fill="#fff" stroke="#b0b0b0" stroke-width="1.1"/><rect x="6" y="8" width="6" height="6" fill="#c0c0c0"/></svg><svg style="position:absolute;left:1190px;top:168px;" width="6" height="4" viewBox="0 0 6 4"><path d="M0 0H5L2.5 3Z" fill="#b8b8b8"/></svg><svg style="position:absolute;left:1230px;top:116px;" width="15" height="14" viewBox="0 0 15 14"><rect x="0" y="1" width="5" height="12" fill="#c8c8c8"/><rect x="8" y="1" width="5" height="12" fill="#c8c8c8"/></svg><svg style="position:absolute;left:1253px;top:120px;" width="6" height="4" viewBox="0 0 6 4"><path d="M0 0H5L2.5 3Z" fill="#333"/></svg><svg style="position:absolute;left:1230px;top:139px;" width="15" height="14" viewBox="0 0 15 14"><rect x="0" y="1" width="5" height="12" fill="#c8c8c8"/><rect x="8" y="1" width="5" height="12" fill="#c8c8c8"/></svg><svg style="position:absolute;left:1253px;top:143.5px;" width="6" height="4" viewBox="0 0 6 4"><path d="M0 0H5L2.5 3Z" fill="#333"/></svg><svg style="position:absolute;left:1230px;top:163px;" width="15" height="14" viewBox="0 0 15 14"><rect x="0" y="1" width="5" height="12" fill="#c8c8c8"/><rect x="8" y="1" width="5" height="12" fill="#c8c8c8"/></svg><svg style="position:absolute;left:1253px;top:167px;" width="6" height="4" viewBox="0 0 6 4"><path d="M0 0H5L2.5 3Z" fill="#333"/></svg><svg style="position:absolute;left:1258px;top:88px;" width="11" height="8" viewBox="0 0 11 8"><path d="M1 7L5.5 3L10 7M1 5L5.5 1L10 5" stroke="#777" stroke-width="1.1" fill="none"/></svg><svg style="position:absolute;left:100px;top:224px;" width="14" height="18" viewBox="0 0 14 18"><rect x="1.5" y="1.5" width="4" height="4" fill="#fff" stroke="#222" stroke-width="1"/><rect x="1.5" y="7.5" width="4" height="4" fill="#fff" stroke="#222" stroke-width="1"/><rect x="1.5" y="13.5" width="4" height="4" fill="#fff" stroke="#222" stroke-width="1"/><rect x="8.5" y="7.5" width="4" height="4" fill="#fff" stroke="#222" stroke-width="1"/><path d="M3.5 5.5V7.5M3.5 11.5V13.5M5.5 9.5H8.5" stroke="#888" stroke-width="1"/></svg><svg style="position:absolute;left:124px;top:223px;" width="18" height="19" viewBox="0 0 18 19"><path d="M1 2H4L5 1H9V10H1Z" fill="#ffff66" stroke="#444" stroke-width="0.8"/><path d="M4 6H7L8 5H12V14H4Z" fill="#ffff66" stroke="#444" stroke-width="0.8"/><path d="M7 10H10L11 9H17V18H7Z" fill="#ffff33" stroke="#444" stroke-width="0.8"/></svg><svg style="position:absolute;left:150px;top:226px;" width="17" height="16" viewBox="0 0 17 16"><path d="M1 3H6L7 1H11L12 3H16V15H1Z" fill="#ffff44" stroke="#333" stroke-width="0.9"/><path d="M1 3H16" stroke="#bbbb33"/><path d="M8.5 6V13M5 9.5H12M6 7L11 12M11 7L6 12" stroke="#0022cc" stroke-width="1.2"/></svg><svg style="position:absolute;left:375px;top:249px;" width="20" height="20" viewBox="0 0 20 20"><path d="M2 4 Q8 -1 16 3L12 5L8 4Z" fill="#c8c8c8" stroke="#888" stroke-width="0.6"/><rect x="7" y="4" width="3" height="15" fill="#ee6622"/><rect x="8" y="4" width="1" height="14" fill="#ffcc66"/><rect x="12" y="4" width="3" height="14" fill="#2a6ad0"/><path d="M12 2L16 0L18 3L15 5Z" fill="#aaa"/></svg><svg style="position:absolute;left:400px;top:255px;" width="6" height="4" viewBox="0 0 6 4"><path d="M0 0H5L2.5 3Z" fill="#222"/></svg><svg style="position:absolute;left:413px;top:249px;" width="17" height="20" viewBox="0 0 17 20"><path d="M1 1H12L15 4V18H1Z" fill="#fff" stroke="#777" stroke-width="0.9"/><path d="M12 1V4H15" fill="#ffffaa" stroke="#aaa" stroke-width="0.6"/><circle cx="4" cy="6" r="1.5" fill="#333"/><circle cx="4" cy="10" r="1.5" fill="none" stroke="#333" stroke-width="0.8"/><path d="M3 14L5 15" stroke="#cc9" stroke-width="1"/><path d="M7 6H11M7 10H13M7 14H13" stroke="#888" stroke-width="1"/></svg><svg style="position:absolute;left:437px;top:255px;" width="6" height="4" viewBox="0 0 6 4"><path d="M0 0H5L2.5 3Z" fill="#222"/></svg><svg style="position:absolute;left:97px;top:295px;" width="14" height="12" viewBox="0 0 14 12"><path d="M1 3L3 1H13V9L11 11H1Z" fill="#99ffff" stroke="#555" stroke-width="0.8"/><path d="M11 3H13V9L11 11Z" fill="#339999"/><path d="M1 3H11V11" stroke="#555" stroke-width="0.8" fill="none"/></svg><svg style="position:absolute;left:114px;top:313px;" width="15" height="11" viewBox="0 0 15 11"><path d="M6 1H14L9 10H1Z" fill="none" stroke="#996633" stroke-width="1.3"/></svg><svg style="position:absolute;left:114px;top:331px;" width="15" height="11" viewBox="0 0 15 11"><path d="M6 1H14L9 10H1Z" fill="none" stroke="#996633" stroke-width="1.3"/></svg><svg style="position:absolute;left:114px;top:348px;" width="15" height="11" viewBox="0 0 15 11"><path d="M6 1H14L9 10H1Z" fill="none" stroke="#996633" stroke-width="1.3"/></svg><svg style="position:absolute;left:113px;top:363px;" width="17" height="16" viewBox="0 0 17 16"><path d="M2 8H14M10 2L4 14M3 2L12 14" stroke="#aa6633" stroke-width="1.1"/><path d="M1 1L3 3M3 1L1 3M14 7L16 9M16 7L14 9M1 13L3 15" stroke="#666" stroke-width="0.8"/></svg><svg style="position:absolute;left:102px;top:385px;" width="7" height="9" viewBox="0 0 7 9"><path d="M0 0V9L6 4.5Z" fill="#a0a0a0"/></svg><svg style="position:absolute;left:115px;top:381px;" width="15" height="16" viewBox="0 0 15 16"><rect x="1" y="9" width="6" height="6" fill="#99ffff" stroke="#555" stroke-width="0.8"/><path d="M7 9L14 2M9 2H14V7M1 9L4 6H7" stroke="#333" stroke-width="0.9" fill="none" stroke-dasharray="2 1"/></svg><svg style="position:absolute;left:117px;top:400px;" width="11" height="12" viewBox="0 0 11 12"><path d="M1 4H5V1L10 6L5 11V8H1Z" fill="#ee0000" stroke="#880000" stroke-width="0.6"/></svg><svg style="position:absolute;left:148px;top:767px;" width="11" height="13" viewBox="0 0 11 13"><path d="M1 4H5V1L10 6.5L5 12V9H1Z" fill="#22ee66" stroke="#111" stroke-width="1"/></svg><svg style="position:absolute;left:97px;top:793px;" width="16" height="16" viewBox="0 0 16 16"><rect x="2" y="1" width="3" height="3" fill="#fff" stroke="#1a3a90" stroke-width="0.9"/><rect x="2" y="6.5" width="3" height="3" fill="#fff" stroke="#1a3a90" stroke-width="0.9"/><rect x="2" y="12" width="3" height="3" fill="#fff" stroke="#1a3a90" stroke-width="0.9"/><rect x="8" y="6.5" width="3" height="3" fill="#fff" stroke="#1a3a90" stroke-width="0.9"/><path d="M3.5 4V6.5M3.5 9.5V12M5 8H8" stroke="#333" stroke-width="0.8"/><rect x="0" y="13" width="16" height="3" fill="#ccccff" opacity="0.6"/></svg><svg style="position:absolute;left:120px;top:793px;" width="17" height="17" viewBox="0 0 17 17"><ellipse cx="8.5" cy="8.5" rx="6" ry="6" fill="#2a90c0"/><path d="M3 10 Q8 3 14 6" stroke="#33cc44" stroke-width="3" fill="none"/><path d="M2 13 Q9 2 16 2" stroke="#ffaa00" stroke-width="1.5" fill="none"/></svg><svg style="position:absolute;left:723px;top:220px;" width="16" height="16" viewBox="0 0 16 16"><rect x="1" y="1" width="12" height="11" fill="#ccccff" stroke="#2a3aa0" stroke-width="1.4"/><circle cx="7" cy="7" r="4" fill="#fff" stroke="#444" stroke-width="1"/><path d="M10 10L14 14" stroke="#8a4a2a" stroke-width="2"/></svg><svg style="position:absolute;left:746px;top:220px;" width="16" height="16" viewBox="0 0 16 16"><circle cx="6" cy="6" r="5" fill="#fff" stroke="#333" stroke-width="1"/><path d="M9.5 9.5L14 14" stroke="#8a4a2a" stroke-width="2"/><path d="M3.5 6H8.5M6 3.5V8.5" stroke="#000" stroke-width="1.6"/></svg><svg style="position:absolute;left:770px;top:220px;" width="16" height="16" viewBox="0 0 16 16"><circle cx="6" cy="6" r="5" fill="#fff" stroke="#333" stroke-width="1"/><path d="M9.5 9.5L14 14" stroke="#8a4a2a" stroke-width="2"/><path d="M3.5 6H8.5" stroke="#000" stroke-width="1.6"/></svg><svg style="position:absolute;left:795px;top:221px;" width="14" height="14" viewBox="0 0 14 14"><rect x="1" y="1" width="12" height="12" fill="#ddddff" stroke="#1a2a90" stroke-width="1.5"/><path d="M4 12L11 4" stroke="#1a2a90" stroke-width="1.2"/><path d="M6 4L8 3" stroke="#6af" stroke-width="0.8"/></svg><svg style="position:absolute;left:818px;top:221px;" width="19" height="15" viewBox="0 0 19 15"><path d="M1 4L4 1H13V10L10 13H1Z" fill="#fff" stroke="#999" stroke-width="0.8"/><path d="M4 1H13L10 4H1Z" fill="#99ffff"/><path d="M13 1V10L10 13V4Z" fill="#22aaaa"/><path d="M15 14H18V11Z" fill="#333"/></svg><svg style="position:absolute;left:842px;top:218px;" width="19" height="18" viewBox="0 0 19 18"><path d="M1 9L3 6H12V14L10 16H1Z" fill="#fff" stroke="#999" stroke-width="0.8"/><path d="M3 6H12L10 9H1Z" fill="#99ffff"/><text x="6" y="8" font-size="7.5" font-family="Liberation Sans" fill="#222" font-weight="700">AB</text><path d="M15 17H18V14Z" fill="#333"/></svg><svg style="position:absolute;left:867px;top:220px;" width="17" height="16" viewBox="0 0 17 16"><rect x="1" y="1" width="11" height="12" fill="#fff" stroke="#777" stroke-width="0.8"/><path d="M3 1V13" stroke="#c9c" stroke-width="0.6"/><rect x="4" y="7" width="12" height="8" rx="1" fill="#444"/><circle cx="10" cy="11" r="2.5" fill="#fff"/><circle cx="10" cy="11" r="1.2" fill="#444"/></svg><svg style="position:absolute;left:890px;top:219px;" width="18" height="17" viewBox="0 0 18 17"><path d="M1 7L4 4H12V14L9 17H1Z" fill="#fff" stroke="#999" stroke-width="0.8"/><path d="M12 4V14L9 17V7Z" fill="#33bbbb"/><path d="M7 0V8M3 4H11" stroke="#000" stroke-width="1.4"/><path d="M10 10H17M13.5 7V13" stroke="#000" stroke-width="1.4"/></svg><svg style="position:absolute;left:914px;top:219px;" width="19" height="17" viewBox="0 0 19 17"><path d="M0.5 0.5L5.5 5.5M5.5 0.5L0.5 5.5" stroke="#aa5522" stroke-width="1.3"/><path d="M9 7L17 15M17 7L9 15" stroke="#aa5522" stroke-width="1.4"/><path d="M3 15L9 3" stroke="#aa5522" stroke-width="1.4" stroke-dasharray="2 1.5"/><path d="M16 15H18V13Z" fill="#333"/></svg><svg style="position:absolute;left:939px;top:221px;" width="18" height="15" viewBox="0 0 18 15"><path d="M6 1H15L10 11H1Z" fill="none" stroke="#aa5522" stroke-width="1.5"/><ellipse cx="13" cy="12" rx="4.5" ry="2.5" fill="#667788"/><ellipse cx="13" cy="11" rx="2.5" ry="1" fill="#99ccdd"/></svg><svg style="position:absolute;left:964px;top:220px;" width="17" height="16" viewBox="0 0 17 16"><path d="M9 1L2 14" stroke="#aa5522" stroke-width="1.6" stroke-dasharray="2.5 1.5"/><ellipse cx="12" cy="12" rx="4.5" ry="2.5" fill="#667788"/><ellipse cx="12" cy="11" rx="2.5" ry="1" fill="#99ccdd"/></svg><svg style="position:absolute;left:987px;top:220px;" width="17" height="16" viewBox="0 0 17 16"><path d="M1.7999999999999998 0.7999999999999998L6.2 5.2M6.2 0.7999999999999998L1.7999999999999998 5.2" stroke="#aa5522" stroke-width="1.3"/><path d="M9.8 3.8L14.2 8.2M14.2 3.8L9.8 8.2" stroke="#aa5522" stroke-width="1.3"/><path d="M0.7999999999999998 7.8L5.2 12.2M5.2 7.8L0.7999999999999998 12.2" stroke="#aa5522" stroke-width="1.3"/><ellipse cx="12" cy="12" rx="4.5" ry="2.5" fill="#667788"/><ellipse cx="12" cy="11" rx="2.5" ry="1" fill="#99ccdd"/></svg><svg style="position:absolute;left:1011px;top:220px;" width="17" height="16" viewBox="0 0 17 16"><path d="M1 6H14M9 1L3 13M2 1L11 12" stroke="#aa5522" stroke-width="1.1"/><ellipse cx="12" cy="12" rx="4.5" ry="2.5" fill="#667788"/><ellipse cx="12" cy="11" rx="2.5" ry="1" fill="#99ccdd"/></svg><svg style="position:absolute;left:1045px;top:236px;" width="20" height="20" viewBox="0 0 20 20"><path d="M1 14L13 2L18 7L6 19Z" fill="#fff" stroke="#555" stroke-width="1.2"/><path d="M5 13L7 15M8 10L9.5 11.5M11 7L13 9M14 4L15.5 5.5" stroke="#777" stroke-width="0.8"/></svg><svg style="position:absolute;left:1070px;top:235px;" width="18" height="20" viewBox="0 0 18 20"><path d="M1.5 2V14M16.5 3V14" stroke="#333" stroke-width="1"/><path d="M3 4 Q6 1 9 4 T15 6" stroke="#222" stroke-width="1" fill="none"/><path d="M1 17 Q5 13 9 16.5 T17 16" stroke="#cc55cc" stroke-width="1.8" fill="none"/></svg><svg style="position:absolute;left:1094px;top:236px;" width="19" height="20" viewBox="0 0 19 20"><path d="M1.5 1V15M11.5 1V10" stroke="#333" stroke-width="1"/><path d="M3 4H10" stroke="#333" stroke-width="1"/><path d="M2 4L5 2V6Z M11 4L8 2V6Z" fill="#222"/><circle cx="2" cy="16" r="1.8" fill="#0a4ad0"/><circle cx="12" cy="12" r="1.8" fill="#0a4ad0"/><circle cx="17" cy="18" r="1.8" fill="#0a4ad0"/></svg><svg style="position:absolute;left:1118px;top:237px;" width="20" height="17" viewBox="0 0 20 17"><path d="M1 15L15 2M1 15H19" stroke="#555" stroke-width="1.2"/><path d="M10 7 Q15 9 14 14" stroke="#000" stroke-width="1.3" fill="none"/><path d="M12 14L14 16L16 13Z M9 6L11 9L12 5Z" fill="#000"/></svg><svg style="position:absolute;left:1144px;top:236px;" width="19" height="19" viewBox="0 0 19 19"><circle cx="9.5" cy="9.5" r="8" fill="none" stroke="#333" stroke-width="1.1"/><path d="M5 14L14 5" stroke="#000" stroke-width="1.2"/><path d="M4 15L5 10L9 14Z M15 4L14 9L10 5Z" fill="#000"/></svg><svg style="position:absolute;left:1169px;top:236px;" width="18" height="18" viewBox="0 0 18 18"><rect x="1" y="1" width="16" height="16" fill="#fff" stroke="#888" stroke-width="1.5"/><path d="M3 3L15 15M15 3L3 15" stroke="#222" stroke-width="1"/><path d="M3 3L6 3.5L3.5 6Z M15 3L12 3.5L14.5 6Z M3 15L3.5 12L6 14.5Z M15 15L14.5 12L12 14.5Z" fill="#000"/></svg><div style="left:1191px;top:257px;width:23px;height:2px;background:#ccccff"></div><svg style="position:absolute;left:1194px;top:236px;" width="18" height="18" viewBox="0 0 18 18"><path d="M1 5L4 2H17V13L14 16H1Z" fill="#ffffcc" stroke="#444" stroke-width="0.9"/><path d="M1 10H14V16H1Z" fill="#99ffff"/><path d="M14 10L17 7V13L14 16Z" fill="#229999"/><path d="M1 5H14V16M14 5L17 2M1 10H14L17 7" stroke="#444" stroke-width="0.9" fill="none"/></svg><svg style="position:absolute;left:1217px;top:235px;" width="22" height="20" viewBox="0 0 22 20"><text x="3" y="6" font-size="6" fill="#444" font-family="Liberation Sans">Y</text><text x="8" y="9" font-size="6" fill="#444" font-family="Liberation Sans">X</text><text x="1" y="11" font-size="6" fill="#444" font-family="Liberation Sans">Z</text><path d="M3 12V16H8" stroke="#000" stroke-width="1.3" fill="none"/><path d="M7 14L9 16L7 18Z" fill="#000"/><text x="10" y="19" font-size="7" fill="#444" font-family="Liberation Sans">YZ</text><text x="14" y="13" font-size="5" fill="#444" font-family="Liberation Sans">X</text></svg><div style="left:1239px;top:234px;width:1px;height:23px;background:#ccccf0"></div><svg style="position:absolute;left:1036px;top:435px;" width="14" height="20" viewBox="0 0 14 20"><path d="M1 1V16L5 12L8 19L10.5 18L7.5 11H13Z" fill="#fff" stroke="#000" stroke-width="1.1" stroke-linejoin="round"/></svg><svg style="position:absolute;left:99px;top:736px;" width="6" height="8" viewBox="0 0 6 8"><path d="M5 0V8L0 4Z" fill="#c8c8c8"/></svg><svg style="position:absolute;left:287px;top:736px;" width="6" height="9" viewBox="0 0 6 9"><path d="M0 0V8L5 4Z" fill="#c8c8c8"/></svg><svg style="position:absolute;left:299px;top:736px;" width="7" height="9" viewBox="0 0 7 9"><path d="M6 0V8L0 4Z" fill="#555"/></svg><svg style="position:absolute;left:318px;top:736px;" width="13" height="8" viewBox="0 0 13 8"><rect x="1" y="1" width="2" height="6" fill="#aaa"/><rect x="5" y="0" width="2" height="8" fill="#aaa"/><rect x="9" y="1" width="2" height="6" fill="#aaa"/></svg><svg style="position:absolute;left:434px;top:736px;" width="7" height="9" viewBox="0 0 7 9"><path d="M0 0V8L6 4Z" fill="#555"/></svg><svg style="position:absolute;left:1250px;top:403px;" width="13" height="15" viewBox="0 0 13 15"><path d="M2 13L11 2M2 9V13H6M11 6V2H7" stroke="#b4b4b4" stroke-width="1.2" fill="none"/></svg>
</body></html>
